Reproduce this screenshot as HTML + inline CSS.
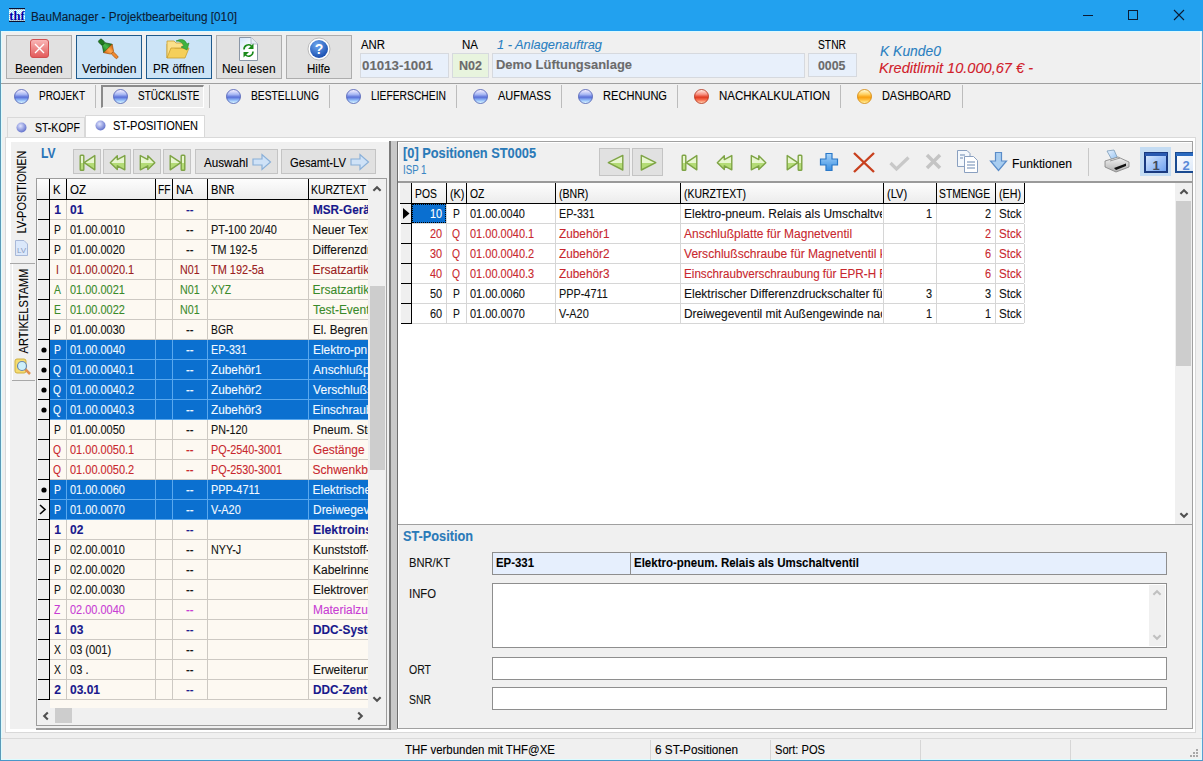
<!DOCTYPE html><html><head><meta charset="utf-8"><style>
html,body{margin:0;padding:0;}
body{width:1203px;height:761px;overflow:hidden;position:relative;background:#f0f0f0;font-family:"Liberation Sans",sans-serif;}
div{position:absolute;box-sizing:border-box;}
.t{white-space:nowrap;-webkit-text-stroke:0.1px currentColor;}
</style></head><body>
<div style="left:0px;top:0px;width:1203px;height:31px;background:#22a1ef"></div>
<svg style="position:absolute;left:9px;top:8px;" width="16" height="14" viewBox="0 0 16 14"><defs><pattern id="ck" width="2" height="2" patternUnits="userSpaceOnUse"><rect width="2" height="2" fill="#fff"/><rect width="1" height="1" fill="#9ee8ff"/><rect x="1" y="1" width="1" height="1" fill="#9ee8ff"/></pattern></defs><rect x="0" y="0" width="16" height="14" fill="url(#ck)"/><rect x="0" y="0" width="16" height="1.2" fill="#0a1030"/><rect x="0" y="12.8" width="16" height="1.2" fill="#0a1030"/><text x="0.3" y="11.8" font-family="Liberation Serif" font-weight="bold" font-size="13.5" fill="#0000a8" textLength="15.4" lengthAdjust="spacingAndGlyphs">thf</text></svg>
<div class="t" style="left:31.00px;top:6.84px;font-size:12px;line-height:20px;color:#0c1b33;transform:scaleX(0.9801);transform-origin:0 0;">BauManager - Projektbearbeitung [010]</div>
<div style="left:1083px;top:15px;width:10px;height:1px;background:#0c1b33"></div>
<div style="left:1128px;top:10px;width:10px;height:10px;border:1px solid #0c1b33"></div>
<svg style="position:absolute;left:1173px;top:9px;" width="12" height="12" viewBox="0 0 12 12"><path d="M1 1L11 11M11 1L1 11" stroke="#0c1b33" stroke-width="1.1"/></svg>
<div style="left:0px;top:31px;width:1px;height:730px;background:#5a9ab8"></div>
<div style="left:1px;top:32px;width:1px;height:728px;background:#dcfcff"></div>
<div style="left:1202px;top:31px;width:1px;height:730px;background:#5aa0d0"></div>
<div style="left:1201px;top:84px;width:1px;height:676px;background:#dcfcff"></div>
<div style="left:1px;top:759px;width:1201px;height:1px;background:#dcfcff"></div>
<div style="left:0px;top:760px;width:1203px;height:1px;background:#4a96c8"></div>
<div style="left:1px;top:31px;width:1201px;height:1px;background:#dcfaff"></div>
<div style="left:6px;top:35px;width:66px;height:44px;background:#e1e1e1;border:1px solid #adadad"></div>
<div class="t" style="left:15.13px;top:58.84px;font-size:12px;line-height:20px;color:#000;transform:scaleX(0.9934);transform-origin:0 0;">Beenden</div>
<svg style="position:absolute;left:30px;top:39px;" width="19" height="19" viewBox="0 0 19 19"><defs><linearGradient id="rg" x1="0" y1="0" x2="0" y2="1"><stop offset="0" stop-color="#fab8b8"/><stop offset="1" stop-color="#e25858"/></linearGradient></defs><rect x="0.5" y="0.5" width="18" height="18" rx="2.5" fill="url(#rg)" stroke="#d05050"/><path d="M5 5L14 14M14 5L5 14" stroke="#fff" stroke-width="1.4"/></svg>
<div style="left:76px;top:35px;width:66px;height:44px;background:#cce4f7;border:1px solid #1f5a8c"></div>
<div class="t" style="left:81.73px;top:58.84px;font-size:12px;line-height:20px;color:#000;transform:scaleX(1.0088);transform-origin:0 0;">Verbinden</div>
<svg style="position:absolute;left:97px;top:37px;" width="24" height="25" viewBox="0 0 24 25"><defs><linearGradient id="vg" x1="0" y1="0" x2="1" y2="0"><stop offset="0" stop-color="#1a7a1a"/><stop offset="0.5" stop-color="#48b848"/><stop offset="1" stop-color="#1a6a1a"/></linearGradient><linearGradient id="vo" x1="0" y1="0" x2="1" y2="0"><stop offset="0" stop-color="#d86a10"/><stop offset="0.5" stop-color="#ffa850"/><stop offset="1" stop-color="#c85a00"/></linearGradient></defs><g transform="rotate(-45 12 12.5)"><rect x="9.8" y="-1" width="4.4" height="6" rx="1.5" fill="#1f7a1f" stroke="#0e4a0e" stroke-width="0.6"/><path d="M10 5L14 5L18 11L6 11Z" fill="url(#vg)" stroke="#0e4a0e" stroke-width="0.6"/><path d="M6 11L18 11L14 17L10 17Z" fill="url(#vo)" stroke="#a04a00" stroke-width="0.6"/><rect x="10.5" y="17" width="3" height="7.5" rx="1.2" fill="#f08a30" stroke="#a04a00" stroke-width="0.6"/></g></svg>
<div style="left:146px;top:35px;width:66px;height:44px;background:#cce4f7;border:1px solid #1f5a8c"></div>
<div class="t" style="left:153.23px;top:58.84px;font-size:12px;line-height:20px;color:#000;transform:scaleX(0.9696);transform-origin:0 0;">PR öffnen</div>
<svg style="position:absolute;left:166px;top:37px;" width="26" height="24" viewBox="0 0 26 24"><path d="M1 7L1 21L19 21L23 11L9 11Z" fill="#f5cf5a" stroke="#c9a030" stroke-width="0.8"/><path d="M1 7L1 4L8 4L10 6L17 6L17 11L5 11L1 21Z" fill="#fbe08a" stroke="#c9a030" stroke-width="0.8"/><path d="M10 4Q18 0 21 7L23 6L21 13L15 10L18 9Q16 4 10 4Z" fill="#3fb43f" stroke="#2a8a2a" stroke-width="0.6"/></svg>
<div style="left:216px;top:35px;width:66px;height:44px;background:#e1e1e1;border:1px solid #adadad"></div>
<div class="t" style="left:222.24px;top:58.84px;font-size:12px;line-height:20px;color:#000;transform:scaleX(0.9900);transform-origin:0 0;">Neu lesen</div>
<svg style="position:absolute;left:239px;top:37px;" width="20" height="24" viewBox="0 0 20 24"><defs><linearGradient id="dg" x1="0" y1="0" x2="0.6" y2="1"><stop offset="0" stop-color="#cfe4fa"/><stop offset="0.6" stop-color="#fff"/></linearGradient></defs><path d="M0.5 0.5L12 0.5L18.5 7L18.5 23.5L0.5 23.5Z" fill="url(#dg)" stroke="#8a96a6" stroke-width="1"/><path d="M12 0.5L12 7L18.5 7" fill="#e8eef6" stroke="#a8b4c4" stroke-width="0.8"/><path d="M5 12.5A4.5 4.5 0 0 1 12.5 9" fill="none" stroke="#1a8a1a" stroke-width="1.6"/><path d="M14.5 6.5L14.5 12L9 12Z" fill="#1a8a1a"/><path d="M14 14.5A4.5 4.5 0 0 1 6.5 18" fill="none" stroke="#1a8a1a" stroke-width="1.6"/><path d="M4.5 20.5L4.5 15L10 15Z" fill="#1a8a1a"/></svg>
<div style="left:286px;top:35px;width:66px;height:44px;background:#e1e1e1;border:1px solid #adadad"></div>
<div class="t" style="left:307.45px;top:58.84px;font-size:12px;line-height:20px;color:#000;transform:scaleX(0.9623);transform-origin:0 0;">Hilfe</div>
<svg style="position:absolute;left:307px;top:37px;" width="24" height="24" viewBox="0 0 24 24"><defs><radialGradient id="hg" cx="0.4" cy="0.3" r="0.7"><stop offset="0" stop-color="#6fa8f0"/><stop offset="1" stop-color="#1a4fb0"/></radialGradient></defs><circle cx="12" cy="12" r="11" fill="#fff" stroke="#bbb"/><circle cx="12" cy="12" r="9" fill="url(#hg)"/><text x="12" y="17" text-anchor="middle" font-family="Liberation Sans" font-weight="bold" font-size="14" fill="#fff">?</text></svg>
<div class="t" style="left:361.00px;top:34.84px;font-size:12px;line-height:20px;color:#000;transform:scaleX(0.9471);transform-origin:0 0;">ANR</div>
<div style="left:360px;top:53px;width:89px;height:25px;background:#e8f0fb;border:1px solid #d6d9de"></div>
<div class="t" style="left:362.00px;top:55.50px;font-size:13px;line-height:20px;color:#6b6b6b;font-weight:bold;transform:scaleX(1.0230);transform-origin:0 0;">01013-1001</div>
<div class="t" style="left:462.00px;top:34.84px;font-size:12px;line-height:20px;color:#000;transform:scaleX(0.9597);transform-origin:0 0;">NA</div>
<div style="left:452px;top:53px;width:37px;height:25px;background:#e8f4de;border:1px solid #d6d9de"></div>
<div class="t" style="left:458.50px;top:55.50px;font-size:13px;line-height:20px;color:#6b6b6b;font-weight:bold;transform:scaleX(0.9645);transform-origin:0 0;">N02</div>
<div class="t" style="left:496.50px;top:34.50px;font-size:13px;line-height:20px;color:#2a7fc1;font-style:italic;transform:scaleX(0.9860);transform-origin:0 0;">1 - Anlagenauftrag</div>
<div style="left:492px;top:53px;width:313px;height:25px;background:#e8f0fb;border:1px solid #d6d9de"></div>
<div class="t" style="left:495.70px;top:55.32px;font-size:13.5px;line-height:20px;color:#6b6b6b;font-weight:bold;transform:scaleX(0.9594);transform-origin:0 0;">Demo Lüftungsanlage</div>
<div class="t" style="left:818.00px;top:34.84px;font-size:12px;line-height:20px;color:#000;transform:scaleX(0.8570);transform-origin:0 0;">STNR</div>
<div style="left:808px;top:53px;width:49px;height:24px;background:#e8f0fb;border:1px solid #d6d9de"></div>
<div class="t" style="left:818.00px;top:55.84px;font-size:12px;line-height:20px;color:#6b6b6b;font-weight:bold;transform:scaleX(1.0298);transform-origin:0 0;">0005</div>
<div class="t" style="left:879.50px;top:41.15px;font-size:14px;line-height:20px;color:#2a7fc1;font-style:italic;transform:scaleX(0.9919);transform-origin:0 0;">K Kunde0</div>
<div class="t" style="left:879.00px;top:58.15px;font-size:14px;line-height:20px;color:#d0202a;font-style:italic;transform:scaleX(1.0416);transform-origin:0 0;">Kreditlimit 10.000,67 € -</div>
<div style="left:1px;top:83px;width:1200px;height:1px;background:#a0a0a0"></div>
<div style="left:1200px;top:32px;width:1px;height:51px;background:#f8fbff"></div>
<div style="left:95px;top:85px;width:1px;height:23px;background:#bcbcbc"></div>
<div style="left:209px;top:85px;width:1px;height:23px;background:#bcbcbc"></div>
<div style="left:329px;top:85px;width:1px;height:23px;background:#bcbcbc"></div>
<div style="left:456px;top:85px;width:1px;height:23px;background:#bcbcbc"></div>
<div style="left:561px;top:85px;width:1px;height:23px;background:#bcbcbc"></div>
<div style="left:677px;top:85px;width:1px;height:23px;background:#bcbcbc"></div>
<div style="left:840px;top:85px;width:1px;height:23px;background:#bcbcbc"></div>
<div style="left:962px;top:85px;width:1px;height:23px;background:#bcbcbc"></div>
<div style="left:101px;top:85px;width:103px;height:23px;border-top:2px solid #8a8a8a;border-left:2px solid #8a8a8a;border-right:1px solid #fff;border-bottom:1px solid #fff;background:#ececec"></div>
<svg style="position:absolute;left:14px;top:89px;" width="15" height="15" viewBox="0 0 15 15"><defs><linearGradient id="tg0" x1="0" y1="0" x2="0" y2="1"><stop offset="0.05" stop-color="#f4eeff"/><stop offset="0.35" stop-color="#a8b8f4"/><stop offset="0.55" stop-color="#5a70d8"/><stop offset="0.75" stop-color="#90b8f8"/><stop offset="0.95" stop-color="#d8f6ff"/></linearGradient></defs><circle cx="7.5" cy="7.5" r="7" fill="url(#tg0)" stroke="#4858b0" stroke-width="0.8"/></svg>
<div class="t" style="left:39.00px;top:85.84px;font-size:12px;line-height:20px;color:#000;transform:scaleX(0.8311);transform-origin:0 0;">PROJEKT</div>
<svg style="position:absolute;left:113px;top:89px;" width="15" height="15" viewBox="0 0 15 15"><defs><linearGradient id="tg1" x1="0" y1="0" x2="0" y2="1"><stop offset="0.05" stop-color="#f4eeff"/><stop offset="0.35" stop-color="#a8b8f4"/><stop offset="0.55" stop-color="#5a70d8"/><stop offset="0.75" stop-color="#90b8f8"/><stop offset="0.95" stop-color="#d8f6ff"/></linearGradient></defs><circle cx="7.5" cy="7.5" r="7" fill="url(#tg1)" stroke="#4858b0" stroke-width="0.8"/></svg>
<div class="t" style="left:138.00px;top:85.84px;font-size:12px;line-height:20px;color:#000;transform:scaleX(0.8308);transform-origin:0 0;">STÜCKLISTE</div>
<svg style="position:absolute;left:226px;top:89px;" width="15" height="15" viewBox="0 0 15 15"><defs><linearGradient id="tg2" x1="0" y1="0" x2="0" y2="1"><stop offset="0.05" stop-color="#f4eeff"/><stop offset="0.35" stop-color="#a8b8f4"/><stop offset="0.55" stop-color="#5a70d8"/><stop offset="0.75" stop-color="#90b8f8"/><stop offset="0.95" stop-color="#d8f6ff"/></linearGradient></defs><circle cx="7.5" cy="7.5" r="7" fill="url(#tg2)" stroke="#4858b0" stroke-width="0.8"/></svg>
<div class="t" style="left:251.00px;top:85.84px;font-size:12px;line-height:20px;color:#000;transform:scaleX(0.8567);transform-origin:0 0;">BESTELLUNG</div>
<svg style="position:absolute;left:346px;top:89px;" width="15" height="15" viewBox="0 0 15 15"><defs><linearGradient id="tg3" x1="0" y1="0" x2="0" y2="1"><stop offset="0.05" stop-color="#f4eeff"/><stop offset="0.35" stop-color="#a8b8f4"/><stop offset="0.55" stop-color="#5a70d8"/><stop offset="0.75" stop-color="#90b8f8"/><stop offset="0.95" stop-color="#d8f6ff"/></linearGradient></defs><circle cx="7.5" cy="7.5" r="7" fill="url(#tg3)" stroke="#4858b0" stroke-width="0.8"/></svg>
<div class="t" style="left:371.00px;top:85.84px;font-size:12px;line-height:20px;color:#000;transform:scaleX(0.8584);transform-origin:0 0;">LIEFERSCHEIN</div>
<svg style="position:absolute;left:473px;top:89px;" width="15" height="15" viewBox="0 0 15 15"><defs><linearGradient id="tg4" x1="0" y1="0" x2="0" y2="1"><stop offset="0.05" stop-color="#f4eeff"/><stop offset="0.35" stop-color="#a8b8f4"/><stop offset="0.55" stop-color="#5a70d8"/><stop offset="0.75" stop-color="#90b8f8"/><stop offset="0.95" stop-color="#d8f6ff"/></linearGradient></defs><circle cx="7.5" cy="7.5" r="7" fill="url(#tg4)" stroke="#4858b0" stroke-width="0.8"/></svg>
<div class="t" style="left:498.00px;top:85.84px;font-size:12px;line-height:20px;color:#000;transform:scaleX(0.9136);transform-origin:0 0;">AUFMASS</div>
<svg style="position:absolute;left:578px;top:89px;" width="15" height="15" viewBox="0 0 15 15"><defs><linearGradient id="tg5" x1="0" y1="0" x2="0" y2="1"><stop offset="0.05" stop-color="#f4eeff"/><stop offset="0.35" stop-color="#a8b8f4"/><stop offset="0.55" stop-color="#5a70d8"/><stop offset="0.75" stop-color="#90b8f8"/><stop offset="0.95" stop-color="#d8f6ff"/></linearGradient></defs><circle cx="7.5" cy="7.5" r="7" fill="url(#tg5)" stroke="#4858b0" stroke-width="0.8"/></svg>
<div class="t" style="left:603.00px;top:85.84px;font-size:12px;line-height:20px;color:#000;transform:scaleX(0.9229);transform-origin:0 0;">RECHNUNG</div>
<svg style="position:absolute;left:694px;top:89px;" width="15" height="15" viewBox="0 0 15 15"><defs><linearGradient id="tg6" x1="0" y1="0" x2="0" y2="1"><stop offset="0.05" stop-color="#ffe8e0"/><stop offset="0.35" stop-color="#f89080"/><stop offset="0.55" stop-color="#e03a20"/><stop offset="0.75" stop-color="#f87050"/><stop offset="0.95" stop-color="#ffd0b0"/></linearGradient></defs><circle cx="7.5" cy="7.5" r="7" fill="url(#tg6)" stroke="#b02a10" stroke-width="0.8"/></svg>
<div class="t" style="left:719.00px;top:85.84px;font-size:12px;line-height:20px;color:#000;transform:scaleX(0.9583);transform-origin:0 0;">NACHKALKULATION</div>
<svg style="position:absolute;left:857px;top:89px;" width="15" height="15" viewBox="0 0 15 15"><defs><linearGradient id="tg7" x1="0" y1="0" x2="0" y2="1"><stop offset="0.05" stop-color="#fff8d0"/><stop offset="0.35" stop-color="#ffd060"/><stop offset="0.55" stop-color="#f8a010"/><stop offset="0.75" stop-color="#ffc040"/><stop offset="0.95" stop-color="#fff0a0"/></linearGradient></defs><circle cx="7.5" cy="7.5" r="7" fill="url(#tg7)" stroke="#d08000" stroke-width="0.8"/></svg>
<div class="t" style="left:882.00px;top:85.84px;font-size:12px;line-height:20px;color:#000;transform:scaleX(0.9076);transform-origin:0 0;">DASHBOARD</div>
<div style="left:7px;top:117px;width:78px;height:21px;background:#f0f0f0;border:1px solid #d9d9d9;border-bottom:none"></div>
<div style="left:85px;top:115px;width:120px;height:23px;background:#fff;border:1px solid #d9d9d9;border-bottom:none"></div>
<svg style="position:absolute;left:16px;top:122px;" width="11" height="11" viewBox="0 0 11 11"><defs><radialGradient id="sg0" cx="0.4" cy="0.35" r="0.7"><stop offset="0" stop-color="#e0e4ff"/><stop offset="1" stop-color="#5a6ac8"/></radialGradient></defs><circle cx="5.5" cy="5.5" r="5" fill="url(#sg0)"/></svg>
<div class="t" style="left:35.00px;top:117.84px;font-size:12px;line-height:20px;color:#000;transform:scaleX(0.8764);transform-origin:0 0;">ST-KOPF</div>
<svg style="position:absolute;left:95px;top:120px;" width="11" height="11" viewBox="0 0 11 11"><defs><radialGradient id="sg1" cx="0.4" cy="0.35" r="0.7"><stop offset="0" stop-color="#e0e4ff"/><stop offset="1" stop-color="#5a6ac8"/></radialGradient></defs><circle cx="5.5" cy="5.5" r="5" fill="url(#sg1)"/></svg>
<div class="t" style="left:113.00px;top:115.84px;font-size:12px;line-height:20px;color:#000;transform:scaleX(0.9170);transform-origin:0 0;">ST-POSITIONEN</div>
<div style="left:5px;top:137px;width:1191px;height:596px;background:#fff;border:1px solid #d9d9d9"></div>
<div style="left:10px;top:142px;width:1183px;height:587px;background:#f0f0f0"></div>
<div style="left:10px;top:142px;width:26px;height:121px;background:#f0f0f0;border-left:1px solid #fff"></div>
<div style="left:10px;top:263px;width:25px;height:1px;background:#a8a8a8"></div>
<div style="left:12px;top:264px;width:23px;height:116px;background:#f0f0f0;border-left:1px solid #fff"></div>
<div style="left:12px;top:380px;width:23px;height:1px;background:#a8a8a8"></div>
<div class="t" style="left:-24.17px;top:181.50px;width:91.15px;font-size:12px;line-height:20px;color:#000;text-align:center;transform:rotate(-90deg) scaleX(0.9106);transform-origin:50% 50%">LV-POSITIONEN</div>
<div class="t" style="left:-22.32px;top:300.50px;width:92.25px;font-size:12px;line-height:20px;color:#000;text-align:center;transform:rotate(-90deg) scaleX(0.9214);transform-origin:50% 50%">ARTIKELSTAMM</div>
<svg style="position:absolute;left:15px;top:240px;" width="13" height="16" viewBox="0 0 13 16"><path d="M0.5 0.5L9 0.5L12.5 4L12.5 15.5L0.5 15.5Z" fill="#dbe8fb" stroke="#a8b8d8"/><text x="6.5" y="13" text-anchor="middle" font-family="Liberation Sans" font-size="8" fill="#8a9ac0">LV</text></svg>
<svg style="position:absolute;left:14px;top:358px;" width="18" height="18" viewBox="0 0 18 18"><rect x="1" y="1" width="11" height="14" rx="2" fill="#f5dc70" stroke="#d0b040"/><path d="M10 10L16 16" stroke="#e09050" stroke-width="2.5"/><circle cx="8" cy="8" r="4.5" fill="#cdf0fb" stroke="#6a8ab0" stroke-width="1.2"/></svg>
<div style="left:36px;top:142px;width:355px;height:588px;background:#f0f0f0;border-right:2px solid #9a9a9a;border-bottom:2px solid #9a9a9a"></div>
<div class="t" style="left:41.00px;top:142.80px;font-size:15px;line-height:20px;color:#2a74b8;font-weight:bold;transform:scaleX(0.8031);transform-origin:0 0;">LV</div>
<div style="left:73px;top:149px;width:28px;height:25px;background:#e1e1e1;border:1px solid #c4c4c4"></div>
<svg style="position:absolute;left:79px;top:153.5px;" width="18" height="18" viewBox="0 0 18 18"><defs><linearGradient id="ng" x1="0" y1="0" x2="0" y2="1"><stop offset="0.5" stop-color="#e8f6d0"/><stop offset="0.5" stop-color="#b4dc76"/></linearGradient></defs><g fill="url(#ng)" stroke="#7ea445" stroke-width="1.4" stroke-linejoin="round"><rect x="1.2" y="1.2" width="3.6" height="15" rx="0.8"/><path d="M5.2 8.7L15.8 1.6L15.8 15.8Z"/></g></svg>
<div style="left:103px;top:149px;width:28px;height:25px;background:#e1e1e1;border:1px solid #c4c4c4"></div>
<svg style="position:absolute;left:109px;top:153.5px;" width="18" height="18" viewBox="0 0 18 18"><defs><linearGradient id="ng" x1="0" y1="0" x2="0" y2="1"><stop offset="0.5" stop-color="#e8f6d0"/><stop offset="0.5" stop-color="#b4dc76"/></linearGradient></defs><g fill="url(#ng)" stroke="#7ea445" stroke-width="1.4" stroke-linejoin="round"><path d="M1.3 8.7L8.3 1.8L8.3 5.6L15.8 1.6L15.8 15.8L8.3 11.8L8.3 15.6Z"/></g></svg>
<div style="left:133px;top:149px;width:28px;height:25px;background:#e1e1e1;border:1px solid #c4c4c4"></div>
<svg style="position:absolute;left:139px;top:153.5px;" width="18" height="18" viewBox="0 0 18 18"><defs><linearGradient id="ng" x1="0" y1="0" x2="0" y2="1"><stop offset="0.5" stop-color="#e8f6d0"/><stop offset="0.5" stop-color="#b4dc76"/></linearGradient></defs><g fill="url(#ng)" stroke="#7ea445" stroke-width="1.4" stroke-linejoin="round"><path d="M15.8 8.7L8.8 1.8L8.8 5.6L1.3 1.6L1.3 15.8L8.8 11.8L8.8 15.6Z"/></g></svg>
<div style="left:163px;top:149px;width:28px;height:25px;background:#e1e1e1;border:1px solid #c4c4c4"></div>
<svg style="position:absolute;left:169px;top:153.5px;" width="18" height="18" viewBox="0 0 18 18"><defs><linearGradient id="ng" x1="0" y1="0" x2="0" y2="1"><stop offset="0.5" stop-color="#e8f6d0"/><stop offset="0.5" stop-color="#b4dc76"/></linearGradient></defs><g fill="url(#ng)" stroke="#7ea445" stroke-width="1.4" stroke-linejoin="round"><rect x="12.2" y="1.2" width="3.6" height="15" rx="0.8"/><path d="M11.8 8.7L1.2 1.6L1.2 15.8Z"/></g></svg>
<div style="left:195px;top:149px;width:83px;height:25px;background:#e1e1e1;border:1px solid #c4c4c4"></div>
<div class="t" style="left:203.60px;top:152.84px;font-size:12px;line-height:20px;color:#000;transform:scaleX(0.9699);transform-origin:0 0;">Auswahl</div>
<svg style="position:absolute;left:252px;top:153px;" width="20" height="18" viewBox="0 0 20 18"><path d="M1 6L10 6L10 1.5L18.5 9L10 16.5L10 12L1 12Z" fill="#cfe2f7" stroke="#8ab0d8" stroke-width="1.2"/></svg>
<div style="left:281px;top:149px;width:95px;height:25px;background:#e1e1e1;border:1px solid #c4c4c4"></div>
<div class="t" style="left:289.50px;top:152.84px;font-size:12px;line-height:20px;color:#000;transform:scaleX(0.9364);transform-origin:0 0;">Gesamt-LV</div>
<svg style="position:absolute;left:350px;top:153px;" width="20" height="18" viewBox="0 0 20 18"><path d="M1 6L10 6L10 1.5L18.5 9L10 16.5L10 12L1 12Z" fill="#cfe2f7" stroke="#8ab0d8" stroke-width="1.2"/></svg>
<div style="left:36px;top:178px;width:351px;height:548px;background:#f0f0f0;border:1px solid #9c9c9c"></div>
<div style="left:37px;top:179px;width:331px;height:20px;background:linear-gradient(#fdfdfd,#ececec)"></div>
<div style="left:37px;top:199px;width:331px;height:1px;background:#000"></div>
<div style="left:49px;top:179px;width:1px;height:20px;background:#000"></div>
<div style="left:66px;top:179px;width:1px;height:20px;background:#000"></div>
<div style="left:155px;top:179px;width:1px;height:20px;background:#000"></div>
<div style="left:172px;top:179px;width:1px;height:20px;background:#000"></div>
<div style="left:207px;top:179px;width:1px;height:20px;background:#000"></div>
<div style="left:308px;top:179px;width:1px;height:20px;background:#000"></div>
<div class="t" style="left:52.50px;top:179.84px;font-size:12px;line-height:20px;color:#000;transform:scaleX(0.9370);transform-origin:0 0;">K</div>
<div class="t" style="left:69.50px;top:179.84px;font-size:12px;line-height:20px;color:#000;transform:scaleX(0.9599);transform-origin:0 0;">OZ</div>
<div class="t" style="left:158.00px;top:179.84px;font-size:12px;line-height:20px;color:#000;transform:scaleX(0.8524);transform-origin:0 0;">FF</div>
<div class="t" style="left:175.50px;top:179.84px;font-size:12px;line-height:20px;color:#000;transform:scaleX(1.0197);transform-origin:0 0;">NA</div>
<div class="t" style="left:210.50px;top:179.84px;font-size:12px;line-height:20px;color:#000;transform:scaleX(0.9274);transform-origin:0 0;">BNR</div>
<div class="t" style="left:311.00px;top:179.84px;font-size:12px;line-height:20px;color:#000;transform:scaleX(0.8683);transform-origin:0 0;">KURZTEXT</div>
<div style="left:50px;top:200px;width:318px;height:508px;background:#fdf9f2"></div>
<div style="left:0;top:0;width:1203px;height:761px;overflow:hidden;clip-path:inset(179px 835px 53px 37px)">
<div style="left:37px;top:200px;width:12px;height:19px;background:#efefef;border-left:1px solid #fafafa"></div>
<div style="left:38px;top:219px;width:12px;height:1px;background:#000"></div>
<div style="left:49px;top:200px;width:1px;height:20px;background:#000"></div>
<div style="left:50px;top:219px;width:318px;height:1px;background:#cdc9c3"></div>
<div style="left:66px;top:200px;width:1px;height:19px;background:#cdc9c3"></div>
<div style="left:155px;top:200px;width:1px;height:19px;background:#cdc9c3"></div>
<div style="left:172px;top:200px;width:1px;height:19px;background:#cdc9c3"></div>
<div style="left:207px;top:200px;width:1px;height:19px;background:#cdc9c3"></div>
<div style="left:308px;top:200px;width:1px;height:19px;background:#cdc9c3"></div>
<div class="t" style="left:54.16px;top:199.84px;font-size:12px;line-height:20px;color:#18188c;font-weight:bold;">1</div>
<div class="t" style="left:70.00px;top:199.84px;font-size:12px;line-height:20px;color:#18188c;font-weight:bold;">01</div>
<div class="t" style="left:185.70px;top:199.84px;font-size:12px;line-height:20px;color:#18188c;transform:scaleX(0.9500);transform-origin:0 0;">--</div>
<div class="t" style="left:312.50px;top:199.84px;font-size:12px;line-height:20px;color:#18188c;font-weight:bold;transform:scaleX(0.9783);transform-origin:0 0;">MSR-Gerä</div>
<div style="left:37px;top:220px;width:12px;height:19px;background:#efefef;border-left:1px solid #fafafa"></div>
<div style="left:38px;top:239px;width:12px;height:1px;background:#000"></div>
<div style="left:49px;top:220px;width:1px;height:20px;background:#000"></div>
<div style="left:50px;top:239px;width:318px;height:1px;background:#cdc9c3"></div>
<div style="left:66px;top:220px;width:1px;height:19px;background:#cdc9c3"></div>
<div style="left:155px;top:220px;width:1px;height:19px;background:#cdc9c3"></div>
<div style="left:172px;top:220px;width:1px;height:19px;background:#cdc9c3"></div>
<div style="left:207px;top:220px;width:1px;height:19px;background:#cdc9c3"></div>
<div style="left:308px;top:220px;width:1px;height:19px;background:#cdc9c3"></div>
<div class="t" style="left:54.06px;top:219.84px;font-size:12px;line-height:20px;color:#111;transform:scaleX(0.8600);transform-origin:0 0;">P</div>
<div class="t" style="left:70.00px;top:219.84px;font-size:12px;line-height:20px;color:#111;transform:scaleX(0.9144);transform-origin:0 0;">01.00.0010</div>
<div class="t" style="left:185.70px;top:219.84px;font-size:12px;line-height:20px;color:#111;transform:scaleX(0.9500);transform-origin:0 0;">--</div>
<div class="t" style="left:211.00px;top:219.84px;font-size:12px;line-height:20px;color:#111;transform:scaleX(0.9136);transform-origin:0 0;">PT-100 20/40</div>
<div class="t" style="left:312.50px;top:219.84px;font-size:12px;line-height:20px;color:#111;">Neuer Text</div>
<div style="left:37px;top:240px;width:12px;height:19px;background:#efefef;border-left:1px solid #fafafa"></div>
<div style="left:38px;top:259px;width:12px;height:1px;background:#000"></div>
<div style="left:49px;top:240px;width:1px;height:20px;background:#000"></div>
<div style="left:50px;top:259px;width:318px;height:1px;background:#cdc9c3"></div>
<div style="left:66px;top:240px;width:1px;height:19px;background:#cdc9c3"></div>
<div style="left:155px;top:240px;width:1px;height:19px;background:#cdc9c3"></div>
<div style="left:172px;top:240px;width:1px;height:19px;background:#cdc9c3"></div>
<div style="left:207px;top:240px;width:1px;height:19px;background:#cdc9c3"></div>
<div style="left:308px;top:240px;width:1px;height:19px;background:#cdc9c3"></div>
<div class="t" style="left:54.06px;top:239.84px;font-size:12px;line-height:20px;color:#111;transform:scaleX(0.8600);transform-origin:0 0;">P</div>
<div class="t" style="left:70.00px;top:239.84px;font-size:12px;line-height:20px;color:#111;transform:scaleX(0.9144);transform-origin:0 0;">01.00.0020</div>
<div class="t" style="left:185.70px;top:239.84px;font-size:12px;line-height:20px;color:#111;transform:scaleX(0.9500);transform-origin:0 0;">--</div>
<div class="t" style="left:211.00px;top:239.84px;font-size:12px;line-height:20px;color:#111;transform:scaleX(0.8988);transform-origin:0 0;">TM 192-5</div>
<div class="t" style="left:312.50px;top:239.84px;font-size:12px;line-height:20px;color:#111;">Differenzdr</div>
<div style="left:37px;top:260px;width:12px;height:19px;background:#efefef;border-left:1px solid #fafafa"></div>
<div style="left:38px;top:279px;width:12px;height:1px;background:#000"></div>
<div style="left:49px;top:260px;width:1px;height:20px;background:#000"></div>
<div style="left:50px;top:279px;width:318px;height:1px;background:#cdc9c3"></div>
<div style="left:66px;top:260px;width:1px;height:19px;background:#cdc9c3"></div>
<div style="left:155px;top:260px;width:1px;height:19px;background:#cdc9c3"></div>
<div style="left:172px;top:260px;width:1px;height:19px;background:#cdc9c3"></div>
<div style="left:207px;top:260px;width:1px;height:19px;background:#cdc9c3"></div>
<div style="left:308px;top:260px;width:1px;height:19px;background:#cdc9c3"></div>
<div class="t" style="left:56.07px;top:259.84px;font-size:12px;line-height:20px;color:#9a2020;transform:scaleX(0.8600);transform-origin:0 0;">I</div>
<div class="t" style="left:70.00px;top:259.84px;font-size:12px;line-height:20px;color:#9a2020;transform:scaleX(0.9157);transform-origin:0 0;">01.00.0020.1</div>
<div class="t" style="left:179.70px;top:259.84px;font-size:12px;line-height:20px;color:#9a2020;transform:scaleX(0.8903);transform-origin:0 0;">N01</div>
<div class="t" style="left:211.00px;top:259.84px;font-size:12px;line-height:20px;color:#9a2020;transform:scaleX(0.9128);transform-origin:0 0;">TM 192-5a</div>
<div class="t" style="left:312.50px;top:259.84px;font-size:12px;line-height:20px;color:#9a2020;">Ersatzartike</div>
<div style="left:37px;top:280px;width:12px;height:19px;background:#efefef;border-left:1px solid #fafafa"></div>
<div style="left:38px;top:299px;width:12px;height:1px;background:#000"></div>
<div style="left:49px;top:280px;width:1px;height:20px;background:#000"></div>
<div style="left:50px;top:299px;width:318px;height:1px;background:#cdc9c3"></div>
<div style="left:66px;top:280px;width:1px;height:19px;background:#cdc9c3"></div>
<div style="left:155px;top:280px;width:1px;height:19px;background:#cdc9c3"></div>
<div style="left:172px;top:280px;width:1px;height:19px;background:#cdc9c3"></div>
<div style="left:207px;top:280px;width:1px;height:19px;background:#cdc9c3"></div>
<div style="left:308px;top:280px;width:1px;height:19px;background:#cdc9c3"></div>
<div class="t" style="left:54.06px;top:279.84px;font-size:12px;line-height:20px;color:#3a8a2a;transform:scaleX(0.8600);transform-origin:0 0;">A</div>
<div class="t" style="left:70.00px;top:279.84px;font-size:12px;line-height:20px;color:#3a8a2a;transform:scaleX(0.9144);transform-origin:0 0;">01.00.0021</div>
<div class="t" style="left:179.70px;top:279.84px;font-size:12px;line-height:20px;color:#3a8a2a;transform:scaleX(0.8903);transform-origin:0 0;">N01</div>
<div class="t" style="left:211.00px;top:279.84px;font-size:12px;line-height:20px;color:#3a8a2a;transform:scaleX(0.8600);transform-origin:0 0;">XYZ</div>
<div class="t" style="left:312.50px;top:279.84px;font-size:12px;line-height:20px;color:#3a8a2a;">Ersatzartike</div>
<div style="left:37px;top:300px;width:12px;height:19px;background:#efefef;border-left:1px solid #fafafa"></div>
<div style="left:38px;top:319px;width:12px;height:1px;background:#000"></div>
<div style="left:49px;top:300px;width:1px;height:20px;background:#000"></div>
<div style="left:50px;top:319px;width:318px;height:1px;background:#cdc9c3"></div>
<div style="left:66px;top:300px;width:1px;height:19px;background:#cdc9c3"></div>
<div style="left:155px;top:300px;width:1px;height:19px;background:#cdc9c3"></div>
<div style="left:172px;top:300px;width:1px;height:19px;background:#cdc9c3"></div>
<div style="left:207px;top:300px;width:1px;height:19px;background:#cdc9c3"></div>
<div style="left:308px;top:300px;width:1px;height:19px;background:#cdc9c3"></div>
<div class="t" style="left:54.06px;top:299.84px;font-size:12px;line-height:20px;color:#3a8a2a;transform:scaleX(0.8600);transform-origin:0 0;">E</div>
<div class="t" style="left:70.00px;top:299.84px;font-size:12px;line-height:20px;color:#3a8a2a;transform:scaleX(0.9144);transform-origin:0 0;">01.00.0022</div>
<div class="t" style="left:179.70px;top:299.84px;font-size:12px;line-height:20px;color:#3a8a2a;transform:scaleX(0.8903);transform-origin:0 0;">N01</div>
<div class="t" style="left:312.50px;top:299.84px;font-size:12px;line-height:20px;color:#3a8a2a;transform:scaleX(0.9957);transform-origin:0 0;">Test-Event</div>
<div style="left:37px;top:320px;width:12px;height:19px;background:#efefef;border-left:1px solid #fafafa"></div>
<div style="left:38px;top:339px;width:12px;height:1px;background:#000"></div>
<div style="left:49px;top:320px;width:1px;height:20px;background:#000"></div>
<div style="left:50px;top:339px;width:318px;height:1px;background:#cdc9c3"></div>
<div style="left:66px;top:320px;width:1px;height:19px;background:#cdc9c3"></div>
<div style="left:155px;top:320px;width:1px;height:19px;background:#cdc9c3"></div>
<div style="left:172px;top:320px;width:1px;height:19px;background:#cdc9c3"></div>
<div style="left:207px;top:320px;width:1px;height:19px;background:#cdc9c3"></div>
<div style="left:308px;top:320px;width:1px;height:19px;background:#cdc9c3"></div>
<div class="t" style="left:54.06px;top:319.84px;font-size:12px;line-height:20px;color:#111;transform:scaleX(0.8600);transform-origin:0 0;">P</div>
<div class="t" style="left:70.00px;top:319.84px;font-size:12px;line-height:20px;color:#111;transform:scaleX(0.9144);transform-origin:0 0;">01.00.0030</div>
<div class="t" style="left:185.70px;top:319.84px;font-size:12px;line-height:20px;color:#111;transform:scaleX(0.9500);transform-origin:0 0;">--</div>
<div class="t" style="left:211.00px;top:319.84px;font-size:12px;line-height:20px;color:#111;transform:scaleX(0.8600);transform-origin:0 0;">BGR</div>
<div class="t" style="left:312.50px;top:319.84px;font-size:12px;line-height:20px;color:#111;transform:scaleX(0.9712);transform-origin:0 0;">El. Begrenz</div>
<div style="left:37px;top:340px;width:12px;height:19px;background:#efefef;border-left:1px solid #fafafa"></div>
<div style="left:38px;top:359px;width:12px;height:1px;background:#000"></div>
<div style="left:49px;top:340px;width:1px;height:20px;background:#000"></div>
<div style="left:50px;top:340px;width:318px;height:19px;background:#0b70d0"></div>
<div style="left:50px;top:359px;width:318px;height:1px;background:#5aa8ee"></div>
<div style="left:66px;top:340px;width:1px;height:19px;background:#5aa8ee"></div>
<div style="left:155px;top:340px;width:1px;height:19px;background:#5aa8ee"></div>
<div style="left:172px;top:340px;width:1px;height:19px;background:#5aa8ee"></div>
<div style="left:207px;top:340px;width:1px;height:19px;background:#5aa8ee"></div>
<div style="left:308px;top:340px;width:1px;height:19px;background:#5aa8ee"></div>
<div class="t" style="left:54.06px;top:339.84px;font-size:12px;line-height:20px;color:#f4faff;transform:scaleX(0.8600);transform-origin:0 0;">P</div>
<div class="t" style="left:70.00px;top:339.84px;font-size:12px;line-height:20px;color:#f4faff;transform:scaleX(0.9144);transform-origin:0 0;">01.00.0040</div>
<div class="t" style="left:185.70px;top:339.84px;font-size:12px;line-height:20px;color:#f4faff;transform:scaleX(0.9500);transform-origin:0 0;">--</div>
<div class="t" style="left:211.00px;top:339.84px;font-size:12px;line-height:20px;color:#f4faff;transform:scaleX(0.8940);transform-origin:0 0;">EP-331</div>
<div class="t" style="left:312.50px;top:339.84px;font-size:12px;line-height:20px;color:#f4faff;transform:scaleX(0.9915);transform-origin:0 0;">Elektro-pn</div>
<svg style="position:absolute;left:41px;top:347px;" width="6" height="6" viewBox="0 0 6 6"><circle cx="3" cy="3" r="2.6" fill="#000"/></svg>
<div style="left:37px;top:360px;width:12px;height:19px;background:#efefef;border-left:1px solid #fafafa"></div>
<div style="left:38px;top:379px;width:12px;height:1px;background:#000"></div>
<div style="left:49px;top:360px;width:1px;height:20px;background:#000"></div>
<div style="left:50px;top:360px;width:318px;height:19px;background:#0b70d0"></div>
<div style="left:50px;top:379px;width:318px;height:1px;background:#5aa8ee"></div>
<div style="left:66px;top:360px;width:1px;height:19px;background:#5aa8ee"></div>
<div style="left:155px;top:360px;width:1px;height:19px;background:#5aa8ee"></div>
<div style="left:172px;top:360px;width:1px;height:19px;background:#5aa8ee"></div>
<div style="left:207px;top:360px;width:1px;height:19px;background:#5aa8ee"></div>
<div style="left:308px;top:360px;width:1px;height:19px;background:#5aa8ee"></div>
<div class="t" style="left:53.49px;top:359.84px;font-size:12px;line-height:20px;color:#f4faff;transform:scaleX(0.8600);transform-origin:0 0;">Q</div>
<div class="t" style="left:70.00px;top:359.84px;font-size:12px;line-height:20px;color:#f4faff;transform:scaleX(0.9157);transform-origin:0 0;">01.00.0040.1</div>
<div class="t" style="left:185.70px;top:359.84px;font-size:12px;line-height:20px;color:#f4faff;transform:scaleX(0.9500);transform-origin:0 0;">--</div>
<div class="t" style="left:211.00px;top:359.84px;font-size:12px;line-height:20px;color:#f4faff;transform:scaleX(0.9829);transform-origin:0 0;">Zubehör1</div>
<div class="t" style="left:312.50px;top:359.84px;font-size:12px;line-height:20px;color:#f4faff;transform:scaleX(0.9974);transform-origin:0 0;">Anschlußp</div>
<svg style="position:absolute;left:41px;top:367px;" width="6" height="6" viewBox="0 0 6 6"><circle cx="3" cy="3" r="2.6" fill="#000"/></svg>
<div style="left:37px;top:380px;width:12px;height:19px;background:#efefef;border-left:1px solid #fafafa"></div>
<div style="left:38px;top:399px;width:12px;height:1px;background:#000"></div>
<div style="left:49px;top:380px;width:1px;height:20px;background:#000"></div>
<div style="left:50px;top:380px;width:318px;height:19px;background:#0b70d0"></div>
<div style="left:50px;top:399px;width:318px;height:1px;background:#5aa8ee"></div>
<div style="left:66px;top:380px;width:1px;height:19px;background:#5aa8ee"></div>
<div style="left:155px;top:380px;width:1px;height:19px;background:#5aa8ee"></div>
<div style="left:172px;top:380px;width:1px;height:19px;background:#5aa8ee"></div>
<div style="left:207px;top:380px;width:1px;height:19px;background:#5aa8ee"></div>
<div style="left:308px;top:380px;width:1px;height:19px;background:#5aa8ee"></div>
<div class="t" style="left:53.49px;top:379.84px;font-size:12px;line-height:20px;color:#f4faff;transform:scaleX(0.8600);transform-origin:0 0;">Q</div>
<div class="t" style="left:70.00px;top:379.84px;font-size:12px;line-height:20px;color:#f4faff;transform:scaleX(0.9157);transform-origin:0 0;">01.00.0040.2</div>
<div class="t" style="left:185.70px;top:379.84px;font-size:12px;line-height:20px;color:#f4faff;transform:scaleX(0.9500);transform-origin:0 0;">--</div>
<div class="t" style="left:211.00px;top:379.84px;font-size:12px;line-height:20px;color:#f4faff;transform:scaleX(0.9829);transform-origin:0 0;">Zubehör2</div>
<div class="t" style="left:312.50px;top:379.84px;font-size:12px;line-height:20px;color:#f4faff;transform:scaleX(1.0098);transform-origin:0 0;">Verschlußs</div>
<svg style="position:absolute;left:41px;top:387px;" width="6" height="6" viewBox="0 0 6 6"><circle cx="3" cy="3" r="2.6" fill="#000"/></svg>
<div style="left:37px;top:400px;width:12px;height:19px;background:#efefef;border-left:1px solid #fafafa"></div>
<div style="left:38px;top:419px;width:12px;height:1px;background:#000"></div>
<div style="left:49px;top:400px;width:1px;height:20px;background:#000"></div>
<div style="left:50px;top:400px;width:318px;height:19px;background:#0b70d0"></div>
<div style="left:50px;top:419px;width:318px;height:1px;background:#5aa8ee"></div>
<div style="left:66px;top:400px;width:1px;height:19px;background:#5aa8ee"></div>
<div style="left:155px;top:400px;width:1px;height:19px;background:#5aa8ee"></div>
<div style="left:172px;top:400px;width:1px;height:19px;background:#5aa8ee"></div>
<div style="left:207px;top:400px;width:1px;height:19px;background:#5aa8ee"></div>
<div style="left:308px;top:400px;width:1px;height:19px;background:#5aa8ee"></div>
<div class="t" style="left:53.49px;top:399.84px;font-size:12px;line-height:20px;color:#f4faff;transform:scaleX(0.8600);transform-origin:0 0;">Q</div>
<div class="t" style="left:70.00px;top:399.84px;font-size:12px;line-height:20px;color:#f4faff;transform:scaleX(0.9157);transform-origin:0 0;">01.00.0040.3</div>
<div class="t" style="left:185.70px;top:399.84px;font-size:12px;line-height:20px;color:#f4faff;transform:scaleX(0.9500);transform-origin:0 0;">--</div>
<div class="t" style="left:211.00px;top:399.84px;font-size:12px;line-height:20px;color:#f4faff;transform:scaleX(0.9829);transform-origin:0 0;">Zubehör3</div>
<div class="t" style="left:312.50px;top:399.84px;font-size:12px;line-height:20px;color:#f4faff;">Einschraub</div>
<svg style="position:absolute;left:41px;top:407px;" width="6" height="6" viewBox="0 0 6 6"><circle cx="3" cy="3" r="2.6" fill="#000"/></svg>
<div style="left:37px;top:420px;width:12px;height:19px;background:#efefef;border-left:1px solid #fafafa"></div>
<div style="left:38px;top:439px;width:12px;height:1px;background:#000"></div>
<div style="left:49px;top:420px;width:1px;height:20px;background:#000"></div>
<div style="left:50px;top:439px;width:318px;height:1px;background:#cdc9c3"></div>
<div style="left:66px;top:420px;width:1px;height:19px;background:#cdc9c3"></div>
<div style="left:155px;top:420px;width:1px;height:19px;background:#cdc9c3"></div>
<div style="left:172px;top:420px;width:1px;height:19px;background:#cdc9c3"></div>
<div style="left:207px;top:420px;width:1px;height:19px;background:#cdc9c3"></div>
<div style="left:308px;top:420px;width:1px;height:19px;background:#cdc9c3"></div>
<div class="t" style="left:54.06px;top:419.84px;font-size:12px;line-height:20px;color:#111;transform:scaleX(0.8600);transform-origin:0 0;">P</div>
<div class="t" style="left:70.00px;top:419.84px;font-size:12px;line-height:20px;color:#111;transform:scaleX(0.9144);transform-origin:0 0;">01.00.0050</div>
<div class="t" style="left:185.70px;top:419.84px;font-size:12px;line-height:20px;color:#111;transform:scaleX(0.9500);transform-origin:0 0;">--</div>
<div class="t" style="left:211.00px;top:419.84px;font-size:12px;line-height:20px;color:#111;transform:scaleX(0.8934);transform-origin:0 0;">PN-120</div>
<div class="t" style="left:312.50px;top:419.84px;font-size:12px;line-height:20px;color:#111;transform:scaleX(0.9717);transform-origin:0 0;">Pneum. Ste</div>
<div style="left:37px;top:440px;width:12px;height:19px;background:#efefef;border-left:1px solid #fafafa"></div>
<div style="left:38px;top:459px;width:12px;height:1px;background:#000"></div>
<div style="left:49px;top:440px;width:1px;height:20px;background:#000"></div>
<div style="left:50px;top:459px;width:318px;height:1px;background:#cdc9c3"></div>
<div style="left:66px;top:440px;width:1px;height:19px;background:#cdc9c3"></div>
<div style="left:155px;top:440px;width:1px;height:19px;background:#cdc9c3"></div>
<div style="left:172px;top:440px;width:1px;height:19px;background:#cdc9c3"></div>
<div style="left:207px;top:440px;width:1px;height:19px;background:#cdc9c3"></div>
<div style="left:308px;top:440px;width:1px;height:19px;background:#cdc9c3"></div>
<div class="t" style="left:53.49px;top:439.84px;font-size:12px;line-height:20px;color:#c8282e;transform:scaleX(0.8600);transform-origin:0 0;">Q</div>
<div class="t" style="left:70.00px;top:439.84px;font-size:12px;line-height:20px;color:#c8282e;transform:scaleX(0.9157);transform-origin:0 0;">01.00.0050.1</div>
<div class="t" style="left:185.70px;top:439.84px;font-size:12px;line-height:20px;color:#c8282e;transform:scaleX(0.9500);transform-origin:0 0;">--</div>
<div class="t" style="left:211.00px;top:439.84px;font-size:12px;line-height:20px;color:#c8282e;transform:scaleX(0.9030);transform-origin:0 0;">PQ-2540-3001</div>
<div class="t" style="left:312.50px;top:439.84px;font-size:12px;line-height:20px;color:#c8282e;transform:scaleX(0.9913);transform-origin:0 0;">Gestänge</div>
<div style="left:37px;top:460px;width:12px;height:19px;background:#efefef;border-left:1px solid #fafafa"></div>
<div style="left:38px;top:479px;width:12px;height:1px;background:#000"></div>
<div style="left:49px;top:460px;width:1px;height:20px;background:#000"></div>
<div style="left:50px;top:479px;width:318px;height:1px;background:#cdc9c3"></div>
<div style="left:66px;top:460px;width:1px;height:19px;background:#cdc9c3"></div>
<div style="left:155px;top:460px;width:1px;height:19px;background:#cdc9c3"></div>
<div style="left:172px;top:460px;width:1px;height:19px;background:#cdc9c3"></div>
<div style="left:207px;top:460px;width:1px;height:19px;background:#cdc9c3"></div>
<div style="left:308px;top:460px;width:1px;height:19px;background:#cdc9c3"></div>
<div class="t" style="left:53.49px;top:459.84px;font-size:12px;line-height:20px;color:#c8282e;transform:scaleX(0.8600);transform-origin:0 0;">Q</div>
<div class="t" style="left:70.00px;top:459.84px;font-size:12px;line-height:20px;color:#c8282e;transform:scaleX(0.9157);transform-origin:0 0;">01.00.0050.2</div>
<div class="t" style="left:185.70px;top:459.84px;font-size:12px;line-height:20px;color:#c8282e;transform:scaleX(0.9500);transform-origin:0 0;">--</div>
<div class="t" style="left:211.00px;top:459.84px;font-size:12px;line-height:20px;color:#c8282e;transform:scaleX(0.9030);transform-origin:0 0;">PQ-2530-3001</div>
<div class="t" style="left:312.50px;top:459.84px;font-size:12px;line-height:20px;color:#c8282e;">Schwenkbe</div>
<div style="left:37px;top:480px;width:12px;height:19px;background:#efefef;border-left:1px solid #fafafa"></div>
<div style="left:38px;top:499px;width:12px;height:1px;background:#000"></div>
<div style="left:49px;top:480px;width:1px;height:20px;background:#000"></div>
<div style="left:50px;top:480px;width:318px;height:19px;background:#0b70d0"></div>
<div style="left:50px;top:499px;width:318px;height:1px;background:#5aa8ee"></div>
<div style="left:66px;top:480px;width:1px;height:19px;background:#5aa8ee"></div>
<div style="left:155px;top:480px;width:1px;height:19px;background:#5aa8ee"></div>
<div style="left:172px;top:480px;width:1px;height:19px;background:#5aa8ee"></div>
<div style="left:207px;top:480px;width:1px;height:19px;background:#5aa8ee"></div>
<div style="left:308px;top:480px;width:1px;height:19px;background:#5aa8ee"></div>
<div class="t" style="left:54.06px;top:479.84px;font-size:12px;line-height:20px;color:#f4faff;transform:scaleX(0.8600);transform-origin:0 0;">P</div>
<div class="t" style="left:70.00px;top:479.84px;font-size:12px;line-height:20px;color:#f4faff;transform:scaleX(0.9144);transform-origin:0 0;">01.00.0060</div>
<div class="t" style="left:185.70px;top:479.84px;font-size:12px;line-height:20px;color:#f4faff;transform:scaleX(0.9500);transform-origin:0 0;">--</div>
<div class="t" style="left:211.00px;top:479.84px;font-size:12px;line-height:20px;color:#f4faff;transform:scaleX(0.9057);transform-origin:0 0;">PPP-4711</div>
<div class="t" style="left:312.50px;top:479.84px;font-size:12px;line-height:20px;color:#f4faff;">Elektrische</div>
<svg style="position:absolute;left:41px;top:487px;" width="6" height="6" viewBox="0 0 6 6"><circle cx="3" cy="3" r="2.6" fill="#000"/></svg>
<div style="left:37px;top:500px;width:12px;height:19px;background:#efefef;border-left:1px solid #fafafa"></div>
<div style="left:38px;top:519px;width:12px;height:1px;background:#000"></div>
<div style="left:49px;top:500px;width:1px;height:20px;background:#000"></div>
<div style="left:50px;top:500px;width:318px;height:19px;background:#0b70d0"></div>
<div style="left:50px;top:519px;width:318px;height:1px;background:#5aa8ee"></div>
<div style="left:66px;top:500px;width:1px;height:19px;background:#5aa8ee"></div>
<div style="left:155px;top:500px;width:1px;height:19px;background:#5aa8ee"></div>
<div style="left:172px;top:500px;width:1px;height:19px;background:#5aa8ee"></div>
<div style="left:207px;top:500px;width:1px;height:19px;background:#5aa8ee"></div>
<div style="left:308px;top:500px;width:1px;height:19px;background:#5aa8ee"></div>
<div class="t" style="left:54.06px;top:499.84px;font-size:12px;line-height:20px;color:#f4faff;transform:scaleX(0.8600);transform-origin:0 0;">P</div>
<div class="t" style="left:70.00px;top:499.84px;font-size:12px;line-height:20px;color:#f4faff;transform:scaleX(0.9144);transform-origin:0 0;">01.00.0070</div>
<div class="t" style="left:185.70px;top:499.84px;font-size:12px;line-height:20px;color:#f4faff;transform:scaleX(0.9500);transform-origin:0 0;">--</div>
<div class="t" style="left:211.00px;top:499.84px;font-size:12px;line-height:20px;color:#f4faff;transform:scaleX(0.9088);transform-origin:0 0;">V-A20</div>
<div class="t" style="left:312.50px;top:499.84px;font-size:12px;line-height:20px;color:#f4faff;transform:scaleX(0.9955);transform-origin:0 0;">Dreiwegev</div>
<svg style="position:absolute;left:39px;top:504px;" width="8" height="11" viewBox="0 0 8 11"><path d="M1 1L6 5.5L1 10" fill="none" stroke="#000" stroke-width="1.6"/></svg>
<div style="left:37px;top:520px;width:12px;height:19px;background:#efefef;border-left:1px solid #fafafa"></div>
<div style="left:38px;top:539px;width:12px;height:1px;background:#000"></div>
<div style="left:49px;top:520px;width:1px;height:20px;background:#000"></div>
<div style="left:50px;top:539px;width:318px;height:1px;background:#cdc9c3"></div>
<div style="left:66px;top:520px;width:1px;height:19px;background:#cdc9c3"></div>
<div style="left:155px;top:520px;width:1px;height:19px;background:#cdc9c3"></div>
<div style="left:172px;top:520px;width:1px;height:19px;background:#cdc9c3"></div>
<div style="left:207px;top:520px;width:1px;height:19px;background:#cdc9c3"></div>
<div style="left:308px;top:520px;width:1px;height:19px;background:#cdc9c3"></div>
<div class="t" style="left:54.16px;top:519.84px;font-size:12px;line-height:20px;color:#18188c;font-weight:bold;">1</div>
<div class="t" style="left:70.00px;top:519.84px;font-size:12px;line-height:20px;color:#18188c;font-weight:bold;">02</div>
<div class="t" style="left:185.70px;top:519.84px;font-size:12px;line-height:20px;color:#18188c;transform:scaleX(0.9500);transform-origin:0 0;">--</div>
<div class="t" style="left:312.50px;top:519.84px;font-size:12px;line-height:20px;color:#18188c;font-weight:bold;transform:scaleX(1.0190);transform-origin:0 0;">Elektroins</div>
<div style="left:37px;top:540px;width:12px;height:19px;background:#efefef;border-left:1px solid #fafafa"></div>
<div style="left:38px;top:559px;width:12px;height:1px;background:#000"></div>
<div style="left:49px;top:540px;width:1px;height:20px;background:#000"></div>
<div style="left:50px;top:559px;width:318px;height:1px;background:#cdc9c3"></div>
<div style="left:66px;top:540px;width:1px;height:19px;background:#cdc9c3"></div>
<div style="left:155px;top:540px;width:1px;height:19px;background:#cdc9c3"></div>
<div style="left:172px;top:540px;width:1px;height:19px;background:#cdc9c3"></div>
<div style="left:207px;top:540px;width:1px;height:19px;background:#cdc9c3"></div>
<div style="left:308px;top:540px;width:1px;height:19px;background:#cdc9c3"></div>
<div class="t" style="left:54.06px;top:539.84px;font-size:12px;line-height:20px;color:#111;transform:scaleX(0.8600);transform-origin:0 0;">P</div>
<div class="t" style="left:70.00px;top:539.84px;font-size:12px;line-height:20px;color:#111;transform:scaleX(0.9144);transform-origin:0 0;">02.00.0010</div>
<div class="t" style="left:185.70px;top:539.84px;font-size:12px;line-height:20px;color:#111;transform:scaleX(0.9500);transform-origin:0 0;">--</div>
<div class="t" style="left:211.00px;top:539.84px;font-size:12px;line-height:20px;color:#111;transform:scaleX(0.8989);transform-origin:0 0;">NYY-J</div>
<div class="t" style="left:312.50px;top:539.84px;font-size:12px;line-height:20px;color:#111;transform:scaleX(0.9965);transform-origin:0 0;">Kunststoff-</div>
<div style="left:37px;top:560px;width:12px;height:19px;background:#efefef;border-left:1px solid #fafafa"></div>
<div style="left:38px;top:579px;width:12px;height:1px;background:#000"></div>
<div style="left:49px;top:560px;width:1px;height:20px;background:#000"></div>
<div style="left:50px;top:579px;width:318px;height:1px;background:#cdc9c3"></div>
<div style="left:66px;top:560px;width:1px;height:19px;background:#cdc9c3"></div>
<div style="left:155px;top:560px;width:1px;height:19px;background:#cdc9c3"></div>
<div style="left:172px;top:560px;width:1px;height:19px;background:#cdc9c3"></div>
<div style="left:207px;top:560px;width:1px;height:19px;background:#cdc9c3"></div>
<div style="left:308px;top:560px;width:1px;height:19px;background:#cdc9c3"></div>
<div class="t" style="left:54.06px;top:559.84px;font-size:12px;line-height:20px;color:#111;transform:scaleX(0.8600);transform-origin:0 0;">P</div>
<div class="t" style="left:70.00px;top:559.84px;font-size:12px;line-height:20px;color:#111;transform:scaleX(0.9144);transform-origin:0 0;">02.00.0020</div>
<div class="t" style="left:185.70px;top:559.84px;font-size:12px;line-height:20px;color:#111;transform:scaleX(0.9500);transform-origin:0 0;">--</div>
<div class="t" style="left:312.50px;top:559.84px;font-size:12px;line-height:20px;color:#111;transform:scaleX(0.9977);transform-origin:0 0;">Kabelrinne</div>
<div style="left:37px;top:580px;width:12px;height:19px;background:#efefef;border-left:1px solid #fafafa"></div>
<div style="left:38px;top:599px;width:12px;height:1px;background:#000"></div>
<div style="left:49px;top:580px;width:1px;height:20px;background:#000"></div>
<div style="left:50px;top:599px;width:318px;height:1px;background:#cdc9c3"></div>
<div style="left:66px;top:580px;width:1px;height:19px;background:#cdc9c3"></div>
<div style="left:155px;top:580px;width:1px;height:19px;background:#cdc9c3"></div>
<div style="left:172px;top:580px;width:1px;height:19px;background:#cdc9c3"></div>
<div style="left:207px;top:580px;width:1px;height:19px;background:#cdc9c3"></div>
<div style="left:308px;top:580px;width:1px;height:19px;background:#cdc9c3"></div>
<div class="t" style="left:54.06px;top:579.84px;font-size:12px;line-height:20px;color:#111;transform:scaleX(0.8600);transform-origin:0 0;">P</div>
<div class="t" style="left:70.00px;top:579.84px;font-size:12px;line-height:20px;color:#111;transform:scaleX(0.9144);transform-origin:0 0;">02.00.0030</div>
<div class="t" style="left:185.70px;top:579.84px;font-size:12px;line-height:20px;color:#111;transform:scaleX(0.9500);transform-origin:0 0;">--</div>
<div class="t" style="left:312.50px;top:579.84px;font-size:12px;line-height:20px;color:#111;transform:scaleX(0.9977);transform-origin:0 0;">Elektrovert</div>
<div style="left:37px;top:600px;width:12px;height:19px;background:#efefef;border-left:1px solid #fafafa"></div>
<div style="left:38px;top:619px;width:12px;height:1px;background:#000"></div>
<div style="left:49px;top:600px;width:1px;height:20px;background:#000"></div>
<div style="left:50px;top:619px;width:318px;height:1px;background:#cdc9c3"></div>
<div style="left:66px;top:600px;width:1px;height:19px;background:#cdc9c3"></div>
<div style="left:155px;top:600px;width:1px;height:19px;background:#cdc9c3"></div>
<div style="left:172px;top:600px;width:1px;height:19px;background:#cdc9c3"></div>
<div style="left:207px;top:600px;width:1px;height:19px;background:#cdc9c3"></div>
<div style="left:308px;top:600px;width:1px;height:19px;background:#cdc9c3"></div>
<div class="t" style="left:54.35px;top:599.84px;font-size:12px;line-height:20px;color:#c83cd4;transform:scaleX(0.8600);transform-origin:0 0;">Z</div>
<div class="t" style="left:70.00px;top:599.84px;font-size:12px;line-height:20px;color:#c83cd4;transform:scaleX(0.9144);transform-origin:0 0;">02.00.0040</div>
<div class="t" style="left:185.70px;top:599.84px;font-size:12px;line-height:20px;color:#c83cd4;transform:scaleX(0.9500);transform-origin:0 0;">--</div>
<div class="t" style="left:312.50px;top:599.84px;font-size:12px;line-height:20px;color:#c83cd4;transform:scaleX(0.9911);transform-origin:0 0;">Materialzu</div>
<div style="left:37px;top:620px;width:12px;height:19px;background:#efefef;border-left:1px solid #fafafa"></div>
<div style="left:38px;top:639px;width:12px;height:1px;background:#000"></div>
<div style="left:49px;top:620px;width:1px;height:20px;background:#000"></div>
<div style="left:50px;top:639px;width:318px;height:1px;background:#cdc9c3"></div>
<div style="left:66px;top:620px;width:1px;height:19px;background:#cdc9c3"></div>
<div style="left:155px;top:620px;width:1px;height:19px;background:#cdc9c3"></div>
<div style="left:172px;top:620px;width:1px;height:19px;background:#cdc9c3"></div>
<div style="left:207px;top:620px;width:1px;height:19px;background:#cdc9c3"></div>
<div style="left:308px;top:620px;width:1px;height:19px;background:#cdc9c3"></div>
<div class="t" style="left:54.16px;top:619.84px;font-size:12px;line-height:20px;color:#18188c;font-weight:bold;">1</div>
<div class="t" style="left:70.00px;top:619.84px;font-size:12px;line-height:20px;color:#18188c;font-weight:bold;">03</div>
<div class="t" style="left:185.70px;top:619.84px;font-size:12px;line-height:20px;color:#18188c;transform:scaleX(0.9500);transform-origin:0 0;">--</div>
<div class="t" style="left:312.50px;top:619.84px;font-size:12px;line-height:20px;color:#18188c;font-weight:bold;transform:scaleX(0.9842);transform-origin:0 0;">DDC-Syste</div>
<div style="left:37px;top:640px;width:12px;height:19px;background:#efefef;border-left:1px solid #fafafa"></div>
<div style="left:38px;top:659px;width:12px;height:1px;background:#000"></div>
<div style="left:49px;top:640px;width:1px;height:20px;background:#000"></div>
<div style="left:50px;top:659px;width:318px;height:1px;background:#cdc9c3"></div>
<div style="left:66px;top:640px;width:1px;height:19px;background:#cdc9c3"></div>
<div style="left:155px;top:640px;width:1px;height:19px;background:#cdc9c3"></div>
<div style="left:172px;top:640px;width:1px;height:19px;background:#cdc9c3"></div>
<div style="left:207px;top:640px;width:1px;height:19px;background:#cdc9c3"></div>
<div style="left:308px;top:640px;width:1px;height:19px;background:#cdc9c3"></div>
<div class="t" style="left:54.06px;top:639.84px;font-size:12px;line-height:20px;color:#111;transform:scaleX(0.8600);transform-origin:0 0;">X</div>
<div class="t" style="left:70.00px;top:639.84px;font-size:12px;line-height:20px;color:#111;transform:scaleX(0.9201);transform-origin:0 0;">03 (001)</div>
<div class="t" style="left:185.70px;top:639.84px;font-size:12px;line-height:20px;color:#111;transform:scaleX(0.9500);transform-origin:0 0;">--</div>
<div style="left:37px;top:660px;width:12px;height:19px;background:#efefef;border-left:1px solid #fafafa"></div>
<div style="left:38px;top:679px;width:12px;height:1px;background:#000"></div>
<div style="left:49px;top:660px;width:1px;height:20px;background:#000"></div>
<div style="left:50px;top:679px;width:318px;height:1px;background:#cdc9c3"></div>
<div style="left:66px;top:660px;width:1px;height:19px;background:#cdc9c3"></div>
<div style="left:155px;top:660px;width:1px;height:19px;background:#cdc9c3"></div>
<div style="left:172px;top:660px;width:1px;height:19px;background:#cdc9c3"></div>
<div style="left:207px;top:660px;width:1px;height:19px;background:#cdc9c3"></div>
<div style="left:308px;top:660px;width:1px;height:19px;background:#cdc9c3"></div>
<div class="t" style="left:54.06px;top:659.84px;font-size:12px;line-height:20px;color:#111;transform:scaleX(0.8600);transform-origin:0 0;">X</div>
<div class="t" style="left:70.00px;top:659.84px;font-size:12px;line-height:20px;color:#111;transform:scaleX(0.9233);transform-origin:0 0;">03 .</div>
<div class="t" style="left:185.70px;top:659.84px;font-size:12px;line-height:20px;color:#111;transform:scaleX(0.9500);transform-origin:0 0;">--</div>
<div class="t" style="left:312.50px;top:659.84px;font-size:12px;line-height:20px;color:#111;transform:scaleX(0.9977);transform-origin:0 0;">Erweiterun</div>
<div style="left:37px;top:680px;width:12px;height:19px;background:#efefef;border-left:1px solid #fafafa"></div>
<div style="left:38px;top:699px;width:12px;height:1px;background:#000"></div>
<div style="left:49px;top:680px;width:1px;height:20px;background:#000"></div>
<div style="left:50px;top:699px;width:318px;height:1px;background:#cdc9c3"></div>
<div style="left:66px;top:680px;width:1px;height:19px;background:#cdc9c3"></div>
<div style="left:155px;top:680px;width:1px;height:19px;background:#cdc9c3"></div>
<div style="left:172px;top:680px;width:1px;height:19px;background:#cdc9c3"></div>
<div style="left:207px;top:680px;width:1px;height:19px;background:#cdc9c3"></div>
<div style="left:308px;top:680px;width:1px;height:19px;background:#cdc9c3"></div>
<div class="t" style="left:54.16px;top:679.84px;font-size:12px;line-height:20px;color:#18188c;font-weight:bold;">2</div>
<div class="t" style="left:70.00px;top:679.84px;font-size:12px;line-height:20px;color:#18188c;font-weight:bold;">03.01</div>
<div class="t" style="left:185.70px;top:679.84px;font-size:12px;line-height:20px;color:#18188c;transform:scaleX(0.9500);transform-origin:0 0;">--</div>
<div class="t" style="left:312.50px;top:679.84px;font-size:12px;line-height:20px;color:#18188c;font-weight:bold;transform:scaleX(0.9796);transform-origin:0 0;">DDC-Zent</div>
</div>
<div style="left:368px;top:179px;width:18px;height:529px;background:#f0f0f0"></div>
<div style="left:370px;top:286px;width:15px;height:184px;background:#cdcdcd"></div>
<svg style="position:absolute;left:368.5px;top:181px;" width="16" height="16" viewBox="0 0 16 16"><g transform="translate(8 8)"><path d="M-3.6 1.8L0 -1.8L3.6 1.8" fill="none" stroke="#505050" stroke-width="2.1"/></g></svg>
<svg style="position:absolute;left:368.5px;top:690.5px;" width="16" height="16" viewBox="0 0 16 16"><g transform="translate(8 8)"><path d="M-3.6 -1.8L0 1.8L3.6 -1.8" fill="none" stroke="#505050" stroke-width="2.1"/></g></svg>
<div style="left:37px;top:708px;width:331px;height:17px;background:#f0f0f0"></div>
<div style="left:55px;top:708px;width:17px;height:15px;background:#cdcdcd"></div>
<svg style="position:absolute;left:38px;top:707.5px;" width="16" height="16" viewBox="0 0 16 16"><g transform="translate(8 8)"><path d="M1.8 -3.6L-1.8 0L1.8 3.6" fill="none" stroke="#505050" stroke-width="2.1"/></g></svg>
<svg style="position:absolute;left:352px;top:707.5px;" width="16" height="16" viewBox="0 0 16 16"><g transform="translate(8 8)"><path d="M-1.8 -3.6L1.8 0L-1.8 3.6" fill="none" stroke="#505050" stroke-width="2.1"/></g></svg>
<div style="left:389px;top:141px;width:2px;height:589px;background:#7a7a7a"></div>
<div style="left:391px;top:141px;width:6px;height:589px;background:#c9c9c9"></div>
<div style="left:397px;top:141px;width:796px;height:588px;background:#f0f0f0;border:1px solid #a0a0a0;border-left:1px solid #6e6e6e;box-shadow:inset 1px 1px 0 #fff"></div>
<div class="t" style="left:402.60px;top:143.15px;font-size:14px;line-height:20px;color:#2a7ab8;font-weight:bold;transform:scaleX(0.9142);transform-origin:0 0;">[0] Positionen ST0005</div>
<div class="t" style="left:402.60px;top:159.84px;font-size:12px;line-height:20px;color:#3a86c4;transform:scaleX(0.8064);transform-origin:0 0;">ISP 1</div>
<div style="left:599px;top:148px;width:31px;height:28px;background:#e1e1e1;border:1px solid #c4c4c4"></div>
<div style="left:632px;top:148px;width:31px;height:28px;background:#e1e1e1;border:1px solid #c4c4c4"></div>
<svg style="position:absolute;left:606.5px;top:153.5px;" width="18" height="18" viewBox="0 0 18 18"><defs><linearGradient id="ng" x1="0" y1="0" x2="0" y2="1"><stop offset="0.5" stop-color="#e8f6d0"/><stop offset="0.5" stop-color="#b4dc76"/></linearGradient></defs><g fill="url(#ng)" stroke="#7ea445" stroke-width="1.4" stroke-linejoin="round"><path d="M1.3 8.7L15.8 1.4L15.8 16Z"/></g></svg>
<svg style="position:absolute;left:639.5px;top:153.5px;" width="18" height="18" viewBox="0 0 18 18"><defs><linearGradient id="ng" x1="0" y1="0" x2="0" y2="1"><stop offset="0.5" stop-color="#e8f6d0"/><stop offset="0.5" stop-color="#b4dc76"/></linearGradient></defs><g fill="url(#ng)" stroke="#7ea445" stroke-width="1.4" stroke-linejoin="round"><path d="M15.8 8.7L1.3 1.4L1.3 16Z"/></g></svg>
<svg style="position:absolute;left:680.5px;top:153.5px;" width="18" height="18" viewBox="0 0 18 18"><defs><linearGradient id="ng" x1="0" y1="0" x2="0" y2="1"><stop offset="0.5" stop-color="#e8f6d0"/><stop offset="0.5" stop-color="#b4dc76"/></linearGradient></defs><g fill="url(#ng)" stroke="#7ea445" stroke-width="1.4" stroke-linejoin="round"><rect x="1.2" y="1.2" width="3.6" height="15" rx="0.8"/><path d="M5.2 8.7L15.8 1.6L15.8 15.8Z"/></g></svg>
<svg style="position:absolute;left:715.5px;top:153.5px;" width="18" height="18" viewBox="0 0 18 18"><defs><linearGradient id="ng" x1="0" y1="0" x2="0" y2="1"><stop offset="0.5" stop-color="#e8f6d0"/><stop offset="0.5" stop-color="#b4dc76"/></linearGradient></defs><g fill="url(#ng)" stroke="#7ea445" stroke-width="1.4" stroke-linejoin="round"><path d="M1.3 8.7L8.3 1.8L8.3 5.6L15.8 1.6L15.8 15.8L8.3 11.8L8.3 15.6Z"/></g></svg>
<svg style="position:absolute;left:750px;top:153.5px;" width="18" height="18" viewBox="0 0 18 18"><defs><linearGradient id="ng" x1="0" y1="0" x2="0" y2="1"><stop offset="0.5" stop-color="#e8f6d0"/><stop offset="0.5" stop-color="#b4dc76"/></linearGradient></defs><g fill="url(#ng)" stroke="#7ea445" stroke-width="1.4" stroke-linejoin="round"><path d="M15.8 8.7L8.8 1.8L8.8 5.6L1.3 1.6L1.3 15.8L8.8 11.8L8.8 15.6Z"/></g></svg>
<svg style="position:absolute;left:785.5px;top:153.5px;" width="18" height="18" viewBox="0 0 18 18"><defs><linearGradient id="ng" x1="0" y1="0" x2="0" y2="1"><stop offset="0.5" stop-color="#e8f6d0"/><stop offset="0.5" stop-color="#b4dc76"/></linearGradient></defs><g fill="url(#ng)" stroke="#7ea445" stroke-width="1.4" stroke-linejoin="round"><rect x="12.2" y="1.2" width="3.6" height="15" rx="0.8"/><path d="M11.8 8.7L1.2 1.6L1.2 15.8Z"/></g></svg>
<svg style="position:absolute;left:819px;top:152px;" width="20" height="20" viewBox="0 0 20 20"><defs><linearGradient id="pg" x1="0" y1="0" x2="0" y2="1"><stop offset="0" stop-color="#a8d4fa"/><stop offset="1" stop-color="#3a8ee0"/></linearGradient></defs><path d="M7 1.5H13V7H18.5V13H13V18.5H7V13H1.5V7H7Z" fill="url(#pg)" stroke="#2a78c8" stroke-width="1.2"/></svg>
<svg style="position:absolute;left:852px;top:151px;" width="24" height="23" viewBox="0 0 24 23"><path d="M2 2L22 21M22 2L2 21" stroke="#c8401e" stroke-width="2.4"/></svg>
<svg style="position:absolute;left:889px;top:154px;" width="21" height="18" viewBox="0 0 21 18"><path d="M1.5 9L7.5 15L19.5 3.5" fill="none" stroke="#c8c8c8" stroke-width="3.2"/></svg>
<svg style="position:absolute;left:924px;top:152px;" width="19" height="19" viewBox="0 0 19 19"><path d="M3 3L16 16M16 3L3 16" stroke="#c4c4c4" stroke-width="3.5"/></svg>
<svg style="position:absolute;left:956px;top:149px;" width="24" height="25" viewBox="0 0 24 25"><path d="M1.5 1.5H11L14 4.5V17.5H1.5Z" fill="#f4f8fc" stroke="#8aa0c0"/><path d="M8.5 7.5H17.5L21.5 11.5V23.5H8.5Z" fill="#fff" stroke="#8aa0c0"/><path d="M11 13H19M11 16H19M11 19H19M4 6H9M4 9H7" stroke="#6a88b0"/></svg>
<svg style="position:absolute;left:989px;top:151px;" width="19" height="21" viewBox="0 0 19 21"><path d="M6.5 1.5H12.5V10H17.5L9.5 19.5L1.5 10H6.5Z" fill="#a8cdf0" stroke="#5a8cc8" stroke-width="1.2"/></svg>
<div class="t" style="left:1012.00px;top:153.84px;font-size:12px;line-height:20px;color:#000;transform:scaleX(1.0103);transform-origin:0 0;">Funktionen</div>
<div style="left:1088px;top:148px;width:1px;height:28px;background:#c8c8c8"></div>
<svg style="position:absolute;left:1104px;top:149px;" width="26" height="24" viewBox="0 0 26 24"><defs><linearGradient id="pp" x1="0" y1="0" x2="1" y2="1"><stop offset="0" stop-color="#e8f2ff"/><stop offset="1" stop-color="#90c0f0"/></linearGradient><linearGradient id="pb" x1="0" y1="0" x2="0" y2="1"><stop offset="0" stop-color="#f4f4f4"/><stop offset="1" stop-color="#b0b0b0"/></linearGradient></defs><path d="M3 2L10 1L14 10L8 11Z" fill="url(#pp)" stroke="#7a9ab8" stroke-width="0.8"/><path d="M1 12L14 8L25 13L25 18L12 23L1 18Z" fill="url(#pb)" stroke="#808080" stroke-width="0.8"/><path d="M10 19L22 14.5L22 17L12 21Z" fill="#111"/><path d="M6 12L16 9" stroke="#999" stroke-width="1"/></svg>
<div style="left:1140px;top:147px;width:31px;height:29px;background:#c4dcf3"></div>
<svg style="position:absolute;left:1144px;top:152px;" width="24" height="21" viewBox="0 0 24 21"><defs><linearGradient id="w1" x1="0" y1="0" x2="1" y2="1"><stop offset="0" stop-color="#e0eeff"/><stop offset="1" stop-color="#6a9ef0"/></linearGradient></defs><rect x="1" y="1" width="22" height="19" fill="url(#w1)" stroke="#1a3a80" stroke-width="2"/><rect x="1" y="1" width="22" height="3" fill="#2a5ab0"/><text x="12" y="17.5" text-anchor="middle" font-family="Liberation Sans" font-weight="bold" font-size="13" fill="#404a5a">1</text></svg>
<svg style="position:absolute;left:1175px;top:152px;" width="18" height="21" viewBox="0 0 18 21"><defs><linearGradient id="w2" x1="0" y1="0" x2="1" y2="1"><stop offset="0" stop-color="#ffffff"/><stop offset="1" stop-color="#d8e6f8"/></linearGradient></defs><rect x="1" y="1" width="22" height="19" fill="url(#w2)" stroke="#1a4a90" stroke-width="2"/><rect x="1" y="1" width="22" height="3" fill="#2a6ac0"/><text x="11" y="17.5" text-anchor="middle" font-family="Liberation Sans" font-weight="bold" font-size="13" fill="#5a8ad8">2</text></svg>
<div style="left:398px;top:181px;width:794px;height:2px;background:#9a9a9a"></div>
<div style="left:398px;top:183px;width:794px;height:341px;background:#fff"></div>
<div style="left:398px;top:524px;width:794px;height:1px;background:#a0a0a0"></div>
<div style="left:400px;top:183px;width:624px;height:20px;background:linear-gradient(#fdfdfd,#ececec)"></div>
<div style="left:400px;top:183px;width:11px;height:20px;background:#efefef"></div>
<div style="left:400px;top:203px;width:624px;height:1px;background:#000"></div>
<div style="left:411px;top:183px;width:1px;height:20px;background:#000"></div>
<div style="left:446px;top:183px;width:1px;height:20px;background:#000"></div>
<div style="left:466px;top:183px;width:1px;height:20px;background:#000"></div>
<div style="left:555px;top:183px;width:1px;height:20px;background:#000"></div>
<div style="left:680px;top:183px;width:1px;height:20px;background:#000"></div>
<div style="left:883px;top:183px;width:1px;height:20px;background:#000"></div>
<div style="left:936px;top:183px;width:1px;height:20px;background:#000"></div>
<div style="left:995px;top:183px;width:1px;height:20px;background:#000"></div>
<div style="left:1024px;top:183px;width:1px;height:20px;background:#000"></div>
<div class="t" style="left:414.50px;top:183.84px;font-size:12px;line-height:20px;color:#000;transform:scaleX(0.8600);transform-origin:0 0;">POS</div>
<div class="t" style="left:449.50px;top:183.84px;font-size:12px;line-height:20px;color:#000;transform:scaleX(0.9050);transform-origin:0 0;">(K)</div>
<div class="t" style="left:469.50px;top:183.84px;font-size:12px;line-height:20px;color:#000;transform:scaleX(0.8600);transform-origin:0 0;">OZ</div>
<div class="t" style="left:558.50px;top:183.84px;font-size:12px;line-height:20px;color:#000;transform:scaleX(0.8816);transform-origin:0 0;">(BNR)</div>
<div class="t" style="left:683.50px;top:183.84px;font-size:12px;line-height:20px;color:#000;transform:scaleX(0.8701);transform-origin:0 0;">(KURZTEXT)</div>
<div class="t" style="left:886.50px;top:183.84px;font-size:12px;line-height:20px;color:#000;transform:scaleX(0.9282);transform-origin:0 0;">(LV)</div>
<div class="t" style="left:939.00px;top:183.84px;font-size:12px;line-height:20px;color:#000;transform:scaleX(0.8600);transform-origin:0 0;">STMENGE</div>
<div class="t" style="left:998.50px;top:183.84px;font-size:12px;line-height:20px;color:#000;transform:scaleX(0.8892);transform-origin:0 0;">(EH)</div>
<div style="left:400px;top:204px;width:11px;height:19px;background:#efefef;border-left:1px solid #fafafa"></div>
<div style="left:401px;top:223px;width:11px;height:1px;background:#000"></div>
<div style="left:411px;top:204px;width:1px;height:20px;background:#000"></div>
<div style="left:412px;top:223px;width:612px;height:1px;background:#d6d6d6"></div>
<div style="left:446px;top:204px;width:1px;height:19px;background:#d6d6d6"></div>
<div style="left:466px;top:204px;width:1px;height:19px;background:#d6d6d6"></div>
<div style="left:555px;top:204px;width:1px;height:19px;background:#d6d6d6"></div>
<div style="left:680px;top:204px;width:1px;height:19px;background:#d6d6d6"></div>
<div style="left:883px;top:204px;width:1px;height:19px;background:#d6d6d6"></div>
<div style="left:936px;top:204px;width:1px;height:19px;background:#d6d6d6"></div>
<div style="left:995px;top:204px;width:1px;height:19px;background:#d6d6d6"></div>
<div style="left:1024px;top:204px;width:1px;height:19px;background:#d6d6d6"></div>
<div style="left:412px;top:204px;width:34px;height:19px;background:#0a6fd0;outline:1px dotted #000;outline-offset:-1px"></div>
<div class="t" style="left:430.35px;top:203.84px;font-size:12px;line-height:20px;color:#fff;transform:scaleX(0.9100);transform-origin:0 0;">10</div>
<svg style="position:absolute;left:403px;top:208px;" width="7" height="11" viewBox="0 0 7 11"><path d="M0 0L6.5 5.5L0 11Z" fill="#000"/></svg>
<div class="t" style="left:453.06px;top:203.84px;font-size:12px;line-height:20px;color:#111;transform:scaleX(0.8600);transform-origin:0 0;">P</div>
<div class="t" style="left:469.50px;top:203.84px;font-size:12px;line-height:20px;color:#111;transform:scaleX(0.9144);transform-origin:0 0;">01.00.0040</div>
<div class="t" style="left:558.50px;top:203.84px;font-size:12px;line-height:20px;color:#111;transform:scaleX(0.8940);transform-origin:0 0;">EP-331</div>
<div style="left:681px;top:204px;width:201px;height:19px;overflow:hidden">
<div class="t" style="left:2.5px;top:-0.16px;font-size:12px;line-height:20px;color:#111;transform:scaleX(0.9958);transform-origin:0 0">Elektro-pneum. Relais als Umschaltventil</div>
</div>
<div class="t" style="left:925.93px;top:203.84px;font-size:12px;line-height:20px;color:#111;transform:scaleX(0.9100);transform-origin:0 0;">1</div>
<div class="t" style="left:985.43px;top:203.84px;font-size:12px;line-height:20px;color:#111;transform:scaleX(0.9100);transform-origin:0 0;">2</div>
<div class="t" style="left:998.50px;top:203.84px;font-size:12px;line-height:20px;color:#111;transform:scaleX(0.9651);transform-origin:0 0;">Stck</div>
<div style="left:400px;top:224px;width:11px;height:19px;background:#efefef;border-left:1px solid #fafafa"></div>
<div style="left:401px;top:243px;width:11px;height:1px;background:#000"></div>
<div style="left:411px;top:224px;width:1px;height:20px;background:#000"></div>
<div style="left:412px;top:243px;width:612px;height:1px;background:#d6d6d6"></div>
<div style="left:446px;top:224px;width:1px;height:19px;background:#d6d6d6"></div>
<div style="left:466px;top:224px;width:1px;height:19px;background:#d6d6d6"></div>
<div style="left:555px;top:224px;width:1px;height:19px;background:#d6d6d6"></div>
<div style="left:680px;top:224px;width:1px;height:19px;background:#d6d6d6"></div>
<div style="left:883px;top:224px;width:1px;height:19px;background:#d6d6d6"></div>
<div style="left:936px;top:224px;width:1px;height:19px;background:#d6d6d6"></div>
<div style="left:995px;top:224px;width:1px;height:19px;background:#d6d6d6"></div>
<div style="left:1024px;top:224px;width:1px;height:19px;background:#d6d6d6"></div>
<div class="t" style="left:430.35px;top:223.84px;font-size:12px;line-height:20px;color:#c8282e;transform:scaleX(0.9100);transform-origin:0 0;">20</div>
<div class="t" style="left:452.49px;top:223.84px;font-size:12px;line-height:20px;color:#c8282e;transform:scaleX(0.8600);transform-origin:0 0;">Q</div>
<div class="t" style="left:469.50px;top:223.84px;font-size:12px;line-height:20px;color:#c8282e;transform:scaleX(0.9157);transform-origin:0 0;">01.00.0040.1</div>
<div class="t" style="left:558.50px;top:223.84px;font-size:12px;line-height:20px;color:#c8282e;transform:scaleX(0.9829);transform-origin:0 0;">Zubehör1</div>
<div style="left:681px;top:224px;width:201px;height:19px;overflow:hidden">
<div class="t" style="left:2.5px;top:-0.16px;font-size:12px;line-height:20px;color:#c8282e;transform:scaleX(1.0001);transform-origin:0 0">Anschlußplatte für Magnetventil</div>
</div>
<div class="t" style="left:985.43px;top:223.84px;font-size:12px;line-height:20px;color:#c8282e;transform:scaleX(0.9100);transform-origin:0 0;">2</div>
<div class="t" style="left:998.50px;top:223.84px;font-size:12px;line-height:20px;color:#c8282e;transform:scaleX(0.9651);transform-origin:0 0;">Stck</div>
<div style="left:400px;top:244px;width:11px;height:19px;background:#efefef;border-left:1px solid #fafafa"></div>
<div style="left:401px;top:263px;width:11px;height:1px;background:#000"></div>
<div style="left:411px;top:244px;width:1px;height:20px;background:#000"></div>
<div style="left:412px;top:263px;width:612px;height:1px;background:#d6d6d6"></div>
<div style="left:446px;top:244px;width:1px;height:19px;background:#d6d6d6"></div>
<div style="left:466px;top:244px;width:1px;height:19px;background:#d6d6d6"></div>
<div style="left:555px;top:244px;width:1px;height:19px;background:#d6d6d6"></div>
<div style="left:680px;top:244px;width:1px;height:19px;background:#d6d6d6"></div>
<div style="left:883px;top:244px;width:1px;height:19px;background:#d6d6d6"></div>
<div style="left:936px;top:244px;width:1px;height:19px;background:#d6d6d6"></div>
<div style="left:995px;top:244px;width:1px;height:19px;background:#d6d6d6"></div>
<div style="left:1024px;top:244px;width:1px;height:19px;background:#d6d6d6"></div>
<div class="t" style="left:430.35px;top:243.84px;font-size:12px;line-height:20px;color:#c8282e;transform:scaleX(0.9100);transform-origin:0 0;">30</div>
<div class="t" style="left:452.49px;top:243.84px;font-size:12px;line-height:20px;color:#c8282e;transform:scaleX(0.8600);transform-origin:0 0;">Q</div>
<div class="t" style="left:469.50px;top:243.84px;font-size:12px;line-height:20px;color:#c8282e;transform:scaleX(0.9157);transform-origin:0 0;">01.00.0040.2</div>
<div class="t" style="left:558.50px;top:243.84px;font-size:12px;line-height:20px;color:#c8282e;transform:scaleX(0.9829);transform-origin:0 0;">Zubehör2</div>
<div style="left:681px;top:244px;width:201px;height:19px;overflow:hidden">
<div class="t" style="left:2.5px;top:-0.16px;font-size:12px;line-height:20px;color:#c8282e;transform:scaleX(1.0053);transform-origin:0 0">Verschlußschraube für Magnetventil kpl.</div>
</div>
<div class="t" style="left:985.43px;top:243.84px;font-size:12px;line-height:20px;color:#c8282e;transform:scaleX(0.9100);transform-origin:0 0;">6</div>
<div class="t" style="left:998.50px;top:243.84px;font-size:12px;line-height:20px;color:#c8282e;transform:scaleX(0.9651);transform-origin:0 0;">Stck</div>
<div style="left:400px;top:264px;width:11px;height:19px;background:#efefef;border-left:1px solid #fafafa"></div>
<div style="left:401px;top:283px;width:11px;height:1px;background:#000"></div>
<div style="left:411px;top:264px;width:1px;height:20px;background:#000"></div>
<div style="left:412px;top:283px;width:612px;height:1px;background:#d6d6d6"></div>
<div style="left:446px;top:264px;width:1px;height:19px;background:#d6d6d6"></div>
<div style="left:466px;top:264px;width:1px;height:19px;background:#d6d6d6"></div>
<div style="left:555px;top:264px;width:1px;height:19px;background:#d6d6d6"></div>
<div style="left:680px;top:264px;width:1px;height:19px;background:#d6d6d6"></div>
<div style="left:883px;top:264px;width:1px;height:19px;background:#d6d6d6"></div>
<div style="left:936px;top:264px;width:1px;height:19px;background:#d6d6d6"></div>
<div style="left:995px;top:264px;width:1px;height:19px;background:#d6d6d6"></div>
<div style="left:1024px;top:264px;width:1px;height:19px;background:#d6d6d6"></div>
<div class="t" style="left:430.35px;top:263.84px;font-size:12px;line-height:20px;color:#c8282e;transform:scaleX(0.9100);transform-origin:0 0;">40</div>
<div class="t" style="left:452.49px;top:263.84px;font-size:12px;line-height:20px;color:#c8282e;transform:scaleX(0.8600);transform-origin:0 0;">Q</div>
<div class="t" style="left:469.50px;top:263.84px;font-size:12px;line-height:20px;color:#c8282e;transform:scaleX(0.9157);transform-origin:0 0;">01.00.0040.3</div>
<div class="t" style="left:558.50px;top:263.84px;font-size:12px;line-height:20px;color:#c8282e;transform:scaleX(0.9829);transform-origin:0 0;">Zubehör3</div>
<div style="left:681px;top:264px;width:201px;height:19px;overflow:hidden">
<div class="t" style="left:2.5px;top:-0.16px;font-size:12px;line-height:20px;color:#c8282e;transform:scaleX(0.9728);transform-origin:0 0">Einschraubverschraubung für EPR-H R1/8</div>
</div>
<div class="t" style="left:985.43px;top:263.84px;font-size:12px;line-height:20px;color:#c8282e;transform:scaleX(0.9100);transform-origin:0 0;">6</div>
<div class="t" style="left:998.50px;top:263.84px;font-size:12px;line-height:20px;color:#c8282e;transform:scaleX(0.9651);transform-origin:0 0;">Stck</div>
<div style="left:400px;top:284px;width:11px;height:19px;background:#efefef;border-left:1px solid #fafafa"></div>
<div style="left:401px;top:303px;width:11px;height:1px;background:#000"></div>
<div style="left:411px;top:284px;width:1px;height:20px;background:#000"></div>
<div style="left:412px;top:303px;width:612px;height:1px;background:#d6d6d6"></div>
<div style="left:446px;top:284px;width:1px;height:19px;background:#d6d6d6"></div>
<div style="left:466px;top:284px;width:1px;height:19px;background:#d6d6d6"></div>
<div style="left:555px;top:284px;width:1px;height:19px;background:#d6d6d6"></div>
<div style="left:680px;top:284px;width:1px;height:19px;background:#d6d6d6"></div>
<div style="left:883px;top:284px;width:1px;height:19px;background:#d6d6d6"></div>
<div style="left:936px;top:284px;width:1px;height:19px;background:#d6d6d6"></div>
<div style="left:995px;top:284px;width:1px;height:19px;background:#d6d6d6"></div>
<div style="left:1024px;top:284px;width:1px;height:19px;background:#d6d6d6"></div>
<div class="t" style="left:430.35px;top:283.84px;font-size:12px;line-height:20px;color:#111;transform:scaleX(0.9100);transform-origin:0 0;">50</div>
<div class="t" style="left:453.06px;top:283.84px;font-size:12px;line-height:20px;color:#111;transform:scaleX(0.8600);transform-origin:0 0;">P</div>
<div class="t" style="left:469.50px;top:283.84px;font-size:12px;line-height:20px;color:#111;transform:scaleX(0.9144);transform-origin:0 0;">01.00.0060</div>
<div class="t" style="left:558.50px;top:283.84px;font-size:12px;line-height:20px;color:#111;transform:scaleX(0.9057);transform-origin:0 0;">PPP-4711</div>
<div style="left:681px;top:284px;width:201px;height:19px;overflow:hidden">
<div class="t" style="left:2.5px;top:-0.16px;font-size:12px;line-height:20px;color:#111;transform:scaleX(1.0013);transform-origin:0 0">Elektrischer Differenzdruckschalter für Luft</div>
</div>
<div class="t" style="left:925.93px;top:283.84px;font-size:12px;line-height:20px;color:#111;transform:scaleX(0.9100);transform-origin:0 0;">3</div>
<div class="t" style="left:985.43px;top:283.84px;font-size:12px;line-height:20px;color:#111;transform:scaleX(0.9100);transform-origin:0 0;">3</div>
<div class="t" style="left:998.50px;top:283.84px;font-size:12px;line-height:20px;color:#111;transform:scaleX(0.9651);transform-origin:0 0;">Stck</div>
<div style="left:400px;top:304px;width:11px;height:19px;background:#efefef;border-left:1px solid #fafafa"></div>
<div style="left:401px;top:323px;width:11px;height:1px;background:#000"></div>
<div style="left:411px;top:304px;width:1px;height:20px;background:#000"></div>
<div style="left:412px;top:323px;width:612px;height:1px;background:#d6d6d6"></div>
<div style="left:446px;top:304px;width:1px;height:19px;background:#d6d6d6"></div>
<div style="left:466px;top:304px;width:1px;height:19px;background:#d6d6d6"></div>
<div style="left:555px;top:304px;width:1px;height:19px;background:#d6d6d6"></div>
<div style="left:680px;top:304px;width:1px;height:19px;background:#d6d6d6"></div>
<div style="left:883px;top:304px;width:1px;height:19px;background:#d6d6d6"></div>
<div style="left:936px;top:304px;width:1px;height:19px;background:#d6d6d6"></div>
<div style="left:995px;top:304px;width:1px;height:19px;background:#d6d6d6"></div>
<div style="left:1024px;top:304px;width:1px;height:19px;background:#d6d6d6"></div>
<div class="t" style="left:430.35px;top:303.84px;font-size:12px;line-height:20px;color:#111;transform:scaleX(0.9100);transform-origin:0 0;">60</div>
<div class="t" style="left:453.06px;top:303.84px;font-size:12px;line-height:20px;color:#111;transform:scaleX(0.8600);transform-origin:0 0;">P</div>
<div class="t" style="left:469.50px;top:303.84px;font-size:12px;line-height:20px;color:#111;transform:scaleX(0.9144);transform-origin:0 0;">01.00.0070</div>
<div class="t" style="left:558.50px;top:303.84px;font-size:12px;line-height:20px;color:#111;transform:scaleX(0.9088);transform-origin:0 0;">V-A20</div>
<div style="left:681px;top:304px;width:201px;height:19px;overflow:hidden">
<div class="t" style="left:2.5px;top:-0.16px;font-size:12px;line-height:20px;color:#111;transform:scaleX(0.9934);transform-origin:0 0">Dreiwegeventil mit Außengewinde nach DIN</div>
</div>
<div class="t" style="left:925.93px;top:303.84px;font-size:12px;line-height:20px;color:#111;transform:scaleX(0.9100);transform-origin:0 0;">1</div>
<div class="t" style="left:985.43px;top:303.84px;font-size:12px;line-height:20px;color:#111;transform:scaleX(0.9100);transform-origin:0 0;">1</div>
<div class="t" style="left:998.50px;top:303.84px;font-size:12px;line-height:20px;color:#111;transform:scaleX(0.9651);transform-origin:0 0;">Stck</div>
<div style="left:1175px;top:183px;width:17px;height:341px;background:#f0f0f0"></div>
<div style="left:1176px;top:201px;width:15px;height:165px;background:#cdcdcd"></div>
<svg style="position:absolute;left:1175.5px;top:184px;" width="16" height="16" viewBox="0 0 16 16"><g transform="translate(8 8)"><path d="M-3.6 1.8L0 -1.8L3.6 1.8" fill="none" stroke="#505050" stroke-width="2.1"/></g></svg>
<svg style="position:absolute;left:1175.5px;top:507px;" width="16" height="16" viewBox="0 0 16 16"><g transform="translate(8 8)"><path d="M-3.6 -1.8L0 1.8L3.6 -1.8" fill="none" stroke="#505050" stroke-width="2.1"/></g></svg>
<div class="t" style="left:402.60px;top:526.15px;font-size:14px;line-height:20px;color:#2a7ab8;font-weight:bold;transform:scaleX(0.9090);transform-origin:0 0;">ST-Position</div>
<div class="t" style="left:408.50px;top:552.84px;font-size:12px;line-height:20px;color:#111;transform:scaleX(0.9316);transform-origin:0 0;">BNR/KT</div>
<div style="left:492px;top:552px;width:675px;height:23px;background:#e6effd;border:1px solid #8e8e8e"></div>
<div style="left:630px;top:553px;width:1px;height:21px;background:#8e8e8e"></div>
<div class="t" style="left:495.60px;top:552.50px;font-size:13px;line-height:20px;color:#000;font-weight:bold;transform:scaleX(0.8763);transform-origin:0 0;">EP-331</div>
<div class="t" style="left:633.50px;top:552.50px;font-size:13px;line-height:20px;color:#000;font-weight:bold;transform:scaleX(0.8847);transform-origin:0 0;">Elektro-pneum. Relais als Umschaltventil</div>
<div class="t" style="left:409.00px;top:583.84px;font-size:12px;line-height:20px;color:#111;transform:scaleX(0.9417);transform-origin:0 0;">INFO</div>
<div style="left:492px;top:583px;width:675px;height:65px;background:#fff;border:1px solid #8e8e8e"></div>
<div style="left:1149px;top:585px;width:16px;height:61px;background:#f0f0f0"></div>
<svg style="position:absolute;left:1149px;top:585px;" width="16" height="16" viewBox="0 0 16 16"><g transform="translate(8 8)"><path d="M-3.6 1.8L0 -1.8L3.6 1.8" fill="none" stroke="#c0c0c0" stroke-width="2.1"/></g></svg>
<svg style="position:absolute;left:1149px;top:629px;" width="16" height="16" viewBox="0 0 16 16"><g transform="translate(8 8)"><path d="M-3.6 -1.8L0 1.8L3.6 -1.8" fill="none" stroke="#c0c0c0" stroke-width="2.1"/></g></svg>
<div class="t" style="left:409.00px;top:659.84px;font-size:12px;line-height:20px;color:#111;transform:scaleX(0.8758);transform-origin:0 0;">ORT</div>
<div style="left:492px;top:657px;width:675px;height:23px;background:#fff;border:1px solid #8e8e8e"></div>
<div class="t" style="left:409.00px;top:689.84px;font-size:12px;line-height:20px;color:#111;transform:scaleX(0.8682);transform-origin:0 0;">SNR</div>
<div style="left:492px;top:687px;width:675px;height:23px;background:#fff;border:1px solid #8e8e8e"></div>
<div style="left:1px;top:738px;width:1201px;height:1px;background:#dadada"></div>
<div class="t" style="left:404.50px;top:739.84px;font-size:12px;line-height:20px;color:#000;transform:scaleX(0.9531);transform-origin:0 0;">THF verbunden mit THF@XE</div>
<div style="left:650px;top:740px;width:1px;height:20px;background:#d6d6d6"></div>
<div class="t" style="left:654.50px;top:739.84px;font-size:12px;line-height:20px;color:#000;transform:scaleX(0.9795);transform-origin:0 0;">6 ST-Positionen</div>
<div style="left:770px;top:740px;width:1px;height:20px;background:#d6d6d6"></div>
<div class="t" style="left:775.00px;top:739.84px;font-size:12px;line-height:20px;color:#000;transform:scaleX(0.9255);transform-origin:0 0;">Sort: POS</div>
<div style="left:920px;top:740px;width:1px;height:20px;background:#d6d6d6"></div>
<div style="left:1070px;top:740px;width:1px;height:20px;background:#d6d6d6"></div>
<div style="left:1196px;top:749px;width:2px;height:2px;background:#a8a8a8"></div>
<div style="left:1193px;top:752px;width:2px;height:2px;background:#a8a8a8"></div>
<div style="left:1196px;top:752px;width:2px;height:2px;background:#a8a8a8"></div>
<div style="left:1190px;top:755px;width:2px;height:2px;background:#a8a8a8"></div>
<div style="left:1193px;top:755px;width:2px;height:2px;background:#a8a8a8"></div>
<div style="left:1196px;top:755px;width:2px;height:2px;background:#a8a8a8"></div>
</body></html>
